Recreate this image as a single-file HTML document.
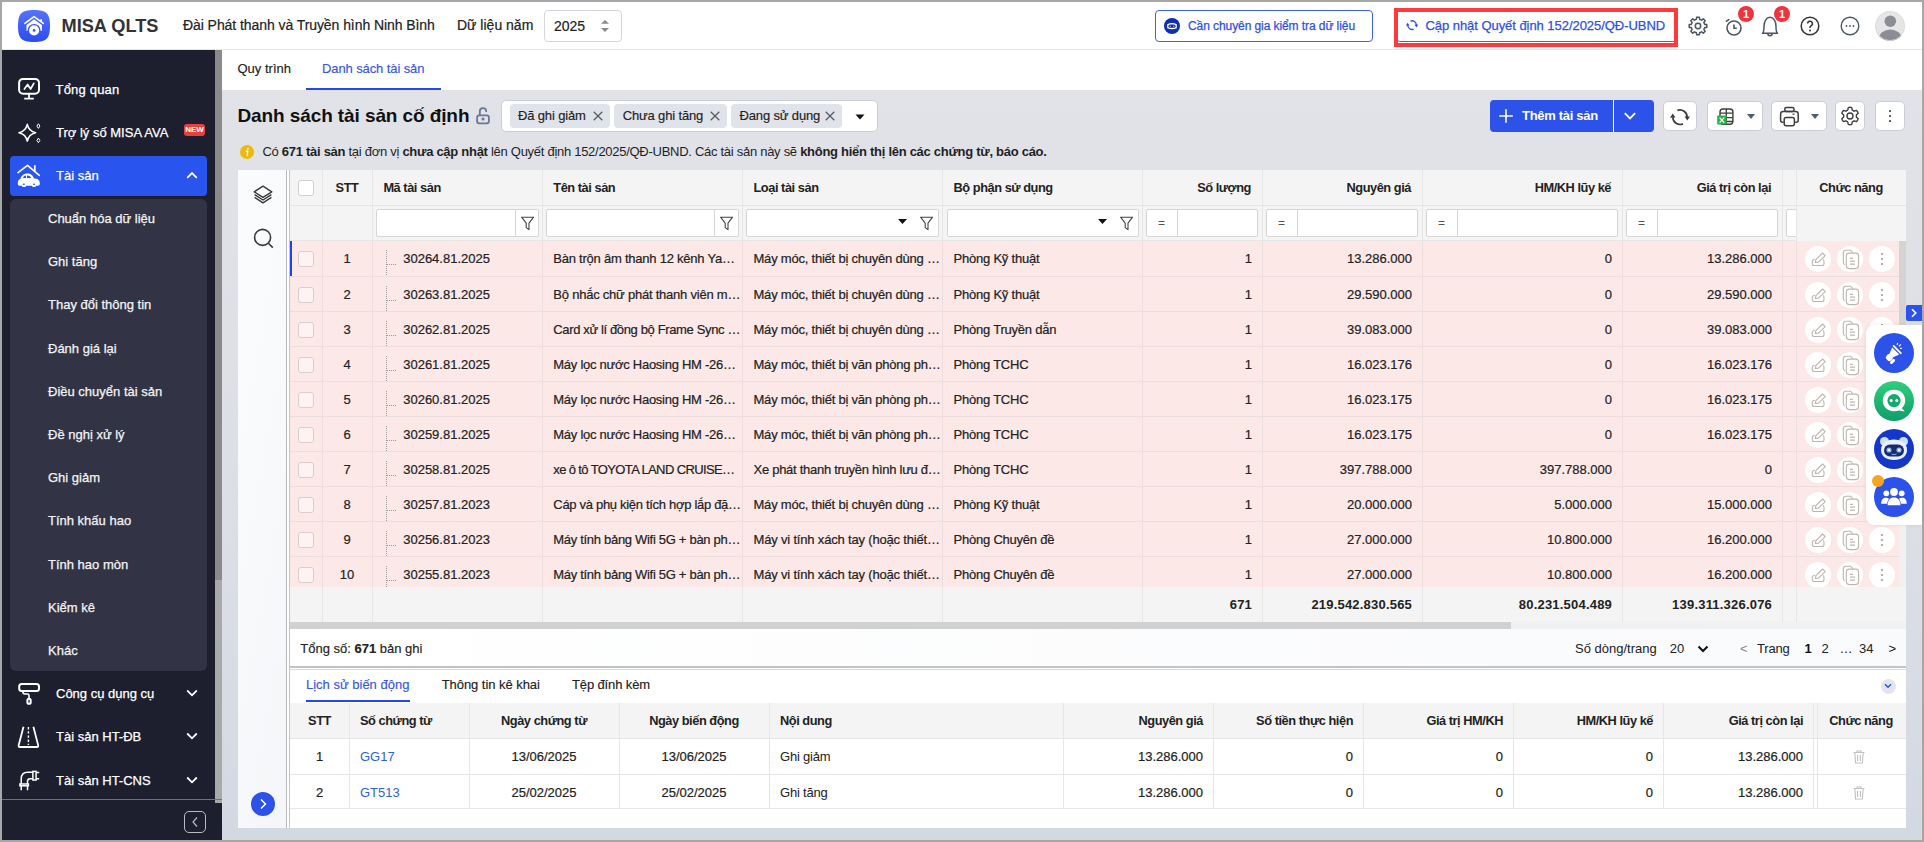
<!DOCTYPE html>
<html><head><meta charset="utf-8">
<style>
*{box-sizing:border-box;margin:0;padding:0}
html,body{width:1924px;height:842px;overflow:hidden;background:#a7a7a7;font-family:"Liberation Sans",sans-serif;color:#212121}
.abs{position:absolute}
.t{position:absolute;white-space:nowrap;line-height:16px;height:16px}
#hdr{position:absolute;left:2px;top:2px;width:1920px;height:48px;background:#fff;border-bottom:1px solid #e4e6eb}
#side{position:absolute;left:2px;top:50px;width:220px;height:790px;background:#1d1f2e;color:#fff}
#main{position:absolute;left:222px;top:50px;width:1700px;height:790px;background:linear-gradient(180deg,#e2e3e8 0%,#dddfe6 55%,#d3d9e3 100%)}
.hbtn{position:absolute;border:1px solid #3d5ef0;border-radius:4px;background:#fff;color:#2f50e8;font-size:13px}
.badge{position:absolute;width:16px;height:16px;border-radius:50%;background:#f0343c;color:#fff;font-size:11px;font-weight:700;text-align:center;line-height:16px}
.mi{position:absolute;left:0;width:220px;height:43px}
.mi .t{font-size:13px;color:#fff;top:14px}
.si{position:absolute;left:46px;font-size:13px;color:#f2f3f6;white-space:nowrap;line-height:16px;-webkit-text-stroke:0.25px currentColor}
.chev{position:absolute;left:184px}
</style></head>
<body>
<div id="hdr">
  <svg class="abs" style="left:16px;top:8px" width="32" height="32" viewBox="0 0 32 32">
    <defs><linearGradient id="lg" x1="0" y1="0" x2="0" y2="1"><stop offset="0" stop-color="#5574f9"/><stop offset="1" stop-color="#2c4cf1"/></linearGradient></defs>
    <path d="M16 0C28.5 0 32 3.5 32 16C32 28.5 28.5 32 16 32C3.5 32 0 28.5 0 16C0 3.5 3.5 0 16 0Z" fill="url(#lg)"/>
    <path d="M8.5 20.8V14.9L16 9.2L23.9 14.9V20.8Z" fill="#fff"/>
    <path d="M6.9 13.4L16 6.6L25.3 13.4" fill="none" stroke="#fff" stroke-width="1.6" stroke-linecap="round" stroke-linejoin="round"/>
    <path d="M22.3 9.2H24V12L22.3 11Z" fill="#fff"/>
    <circle cx="16.1" cy="20.4" r="6.4" fill="#3553f3"/>
    <circle cx="16.1" cy="20.4" r="5.1" fill="#fff"/>
    <circle cx="16.1" cy="20.4" r="1.4" fill="#3a59f3"/>
  </svg>
  <div class="t" style="left:59.5px;top:14.8px;font-size:18.2px;font-weight:700;color:#333;line-height:18px;height:18px">MISA QLTS</div>
  <div class="t" style="left:181px;top:15px;font-size:14px;letter-spacing:-0.07px;color:#222;-webkit-text-stroke:0.2px #222">Đài Phát thanh và Truyền hình Ninh Bình</div>
  <div class="t" style="left:455px;top:15px;font-size:14px;letter-spacing:0px;color:#222;-webkit-text-stroke:0.2px #222">Dữ liệu năm</div>
  <div class="abs" style="left:542px;top:8px;width:78px;height:31.5px;border:1px solid #d3d6dd;border-radius:4px">
    <div class="t" style="left:9px;top:6.8px;font-size:14px;color:#222;-webkit-text-stroke:0.2px #222">2025</div>
    <svg class="abs" style="left:56px;top:9.2px" width="8" height="12" viewBox="0 0 8 12"><path d="M0 3.7L4 0L8 3.7Z M0 7.9H8L4 12Z" fill="#8a8a8a"/></svg>
  </div>
  <div class="hbtn" style="left:1153px;top:8px;width:218px;height:32px">
    <svg class="abs" style="left:8px;top:7px" width="16" height="16" viewBox="0 0 16 16"><circle cx="8" cy="8" r="8" fill="#0d2fb0"/><path d="M3.2 6.2Q8 3.8 12.8 6.2V10.2Q8 12.4 3.2 10.2Z" fill="#fff"/><rect x="4.4" y="6.6" width="7.2" height="3.2" rx="1.6" fill="#1a2a6a"/><circle cx="6.2" cy="8.2" r="0.8" fill="#8fb0ff"/><circle cx="9.8" cy="8.2" r="0.8" fill="#8fb0ff"/></svg>
    <div class="t" style="left:32px;top:6.5px;font-size:12px;letter-spacing:-0.08px;-webkit-text-stroke:0.25px #2f50e8">Cần chuyên gia kiểm tra dữ liệu</div>
  </div>
  <div class="hbtn" style="left:1394px;top:8px;width:282px;height:32px">
    <svg class="abs" style="left:8.8px;top:8px" width="12" height="12" viewBox="0 0 20 20"><path d="M7.4 3.4A7.3 7.3 0 0 1 17.2 10.2" fill="none" stroke="#2f50e8" stroke-width="2.2"/><path d="M14.2 9.4L17.3 14L20.4 9.2Z" fill="#2f50e8"/><path d="M12.9 16.9A7.3 7.3 0 0 1 2.8 10.2" fill="none" stroke="#2f50e8" stroke-width="2.2"/><path d="M-0.4 11L2.7 6.4L5.8 10.8Z" fill="#2f50e8"/></svg>
    <div class="t" style="left:28.5px;top:7px;letter-spacing:-0.05px;-webkit-text-stroke:0.25px #2f50e8">Cập nhật Quyết định 152/2025/QĐ-UBND</div>
  </div>
  <div class="abs" style="left:1392px;top:6px;width:284px;height:39px;border:4px solid #fd3b3d"></div>
  <!-- gear -->
  <svg class="abs" style="left:1684px;top:11.8px" width="24" height="24" viewBox="0 0 24 24"><path fill="none" stroke="#4b5563" stroke-width="1.5" stroke-linejoin="round" d="M10.39 5.29 L10.61 3.21 L13.39 3.21 L13.61 5.29 L15.61 6.12 L17.23 4.80 L19.20 6.77 L17.88 8.39 L18.71 10.39 L20.79 10.61 L20.79 13.39 L18.71 13.61 L17.88 15.61 L19.20 17.23 L17.23 19.20 L15.61 17.88 L13.61 18.71 L13.39 20.79 L10.61 20.79 L10.39 18.71 L8.39 17.88 L6.77 19.20 L4.80 17.23 L6.12 15.61 L5.29 13.61 L3.21 13.39 L3.21 10.61 L5.29 10.39 L6.12 8.39 L4.80 6.77 L6.77 4.80 L8.39 6.12Z"/><circle cx="12" cy="12" r="2.7" fill="none" stroke="#4b5563" stroke-width="1.5"/></svg>
  <!-- timer -->
  <svg class="abs" style="left:1722px;top:15px" width="20" height="20" viewBox="0 0 20 20"><circle cx="10" cy="11" r="7" fill="none" stroke="#4b5563" stroke-width="1.6"/><path d="M10 7.5V11.2H12.8" fill="none" stroke="#4b5563" stroke-width="1.6"/><path d="M2.5 4.2L4.8 2.6" stroke="#4b5563" stroke-width="1.6" stroke-linecap="round"/></svg>
  <div class="badge" style="left:1736px;top:4px">1</div>
  <!-- bell -->
  <svg class="abs" style="left:1757px;top:13px" width="22" height="22" viewBox="0 0 22 22"><path d="M3.5 18.3C5 17 5 14.5 5 11.5C5 6 7.5 2.2 11 2.2C14.5 2.2 17 6 17 11.5C17 14.5 17 17 18.5 18.3Z" fill="none" stroke="#4b5563" stroke-width="1.5" stroke-linejoin="round"/><path d="M8.8 18.6A2.2 2.2 0 0 0 13.2 18.6" fill="none" stroke="#4b5563" stroke-width="1.5"/></svg>
  <div class="badge" style="left:1772px;top:4px">1</div>
  <!-- help -->
  <svg class="abs" style="left:1798px;top:14px" width="20" height="20" viewBox="0 0 20 20"><circle cx="10" cy="10" r="8.8" fill="none" stroke="#333" stroke-width="1.5"/><path d="M7.6 7.6A2.4 2.4 0 1 1 11 9.8C10.3 10.2 10 10.7 10 11.6V12" fill="none" stroke="#333" stroke-width="1.5"/><circle cx="10" cy="14.4" r="1" fill="#333"/></svg>
  <!-- more -->
  <svg class="abs" style="left:1838px;top:14px" width="20" height="20" viewBox="0 0 20 20"><circle cx="10" cy="10" r="8.8" fill="none" stroke="#4b5563" stroke-width="1.4"/><circle cx="6.5" cy="10" r="0.9" fill="#4b5563"/><circle cx="10" cy="10" r="0.9" fill="#4b5563"/><circle cx="13.5" cy="10" r="0.9" fill="#4b5563"/></svg>
  <!-- avatar -->
  <svg class="abs" style="left:1873px;top:9px" width="30" height="30" viewBox="0 0 30 30"><defs><clipPath id="av"><circle cx="15" cy="15" r="15"/></clipPath></defs><circle cx="15" cy="15" r="15" fill="#e6e6e6"/><g clip-path="url(#av)" fill="#8a8d96"><circle cx="15.3" cy="10.2" r="5.8"/><ellipse cx="15.3" cy="28" rx="11.5" ry="9.5"/></g><circle cx="15" cy="15" r="14.6" fill="none" stroke="#dcdcdc" stroke-width="0.8"/></svg>
</div>

<div id="side">
  <div class="abs" style="left:213px;top:0;width:7px;height:753px;background:#a9a9a9"></div><div class="abs" style="left:213px;top:0;width:7px;height:530px;background:#8a8a8a"></div>
  <div class="abs" style="left:8px;top:106px;width:197px;height:40px;border-radius:4px;background:#2a54ee"></div>
  <div class="abs" style="left:8px;top:149px;width:197px;height:472px;border-radius:6px;background:#323344"></div>
  <div class="abs" style="left:0;top:749px;width:220px;height:1px;background:#6b7088"></div>
  <div class="abs" style="left:182px;top:761px;width:22px;height:22px;border:1.5px solid #b9bbc4;border-radius:5px"></div>
  <svg class="abs" style="left:189px;top:766px" width="8" height="12" viewBox="0 0 8 12"><path d="M6 1.5L2 6L6 10.5" fill="none" stroke="#b9bbc4" stroke-width="1.2"/></svg>

  <!-- icons -->
  <svg class="abs" style="left:12px;top:24px" width="32" height="30" viewBox="0 0 32 30"><rect x="5.1" y="4.9" width="19.9" height="14.9" rx="4" fill="none" stroke="#fff" stroke-width="2"/><path d="M15 19.8V24.5M10.2 24.6H19.8" stroke="#fff" stroke-width="1.8"/><path d="M10.4 15L13.6 10.5L16.6 15L19.8 9.3" fill="none" stroke="#fff" stroke-width="1.7" stroke-linejoin="round" stroke-linecap="round"/></svg>
  <svg class="abs" style="left:12px;top:68px" width="32" height="30" viewBox="0 0 32 30"><path d="M13.3 6.4Q14.8 13.2 21.6 14.7Q14.8 16.2 13.3 23Q11.8 16.2 5 14.7Q11.8 13.2 13.3 6.4Z" fill="none" stroke="#fff" stroke-width="1.6" stroke-linejoin="round"/><path d="M24.4 5.8L25.9 8.1L24.4 10.4L22.9 8.1Z M24.4 20.1L25.9 22.4L24.4 24.7L22.9 22.4Z" fill="none" stroke="#fff" stroke-width="1"/></svg>
  <svg class="abs" style="left:12px;top:112px" width="32" height="30" viewBox="0 0 32 30"><path d="M4 10.6L13.5 3.4L25.3 13.3" fill="none" stroke="#fff" stroke-width="1.7" stroke-linecap="round" stroke-linejoin="round"/><path d="M20.8 3.2V9.6" stroke="#fff" stroke-width="1.7"/><path d="M6.3 16.8C7.8 13 10.3 11.5 13.3 11.5C16.4 11.5 18.6 12.8 20.1 16.8Z" fill="#fff"/><path d="M8.9 15.9C9.5 14.4 10.4 13.5 12 13.4V15.9Z M13 13.4C15 13.4 16.3 14.2 17.4 15.9H13Z" fill="#2a54ee"/><path d="M3.8 21C3.8 18.2 5.3 16.6 8.5 16.3H19.5C23.5 16.5 25.8 18 25.8 21V22Q25.8 23.8 24 23.8H22.3Q22 25 20 25Q18 25 17.7 23.8H12.3Q12 25 10 25Q8 25 7.7 23.8H5.6Q3.8 23.8 3.8 22Z" fill="#fff"/><ellipse cx="9.8" cy="22.3" rx="1.1" ry="0.8" fill="#2a54ee"/><ellipse cx="20" cy="22.3" rx="1.1" ry="0.8" fill="#2a54ee"/></svg>
  <svg class="abs" style="left:12px;top:628px" width="32" height="30" viewBox="0 0 32 30"><rect x="5.2" y="5.9" width="19.8" height="7" rx="2.5" fill="none" stroke="#fff" stroke-width="2"/><path d="M8.8 13.3Q8.8 16 11 16H13.5Q15 16 15 17.5V20" fill="none" stroke="#fff" stroke-width="1.6"/><rect x="13.4" y="20.8" width="3.3" height="5" rx="1.6" fill="none" stroke="#fff" stroke-width="2"/></svg>
  <svg class="abs" style="left:12px;top:670px" width="32" height="30" viewBox="0 0 32 30"><path d="M9.5 6.8L4.6 25.4Q4.4 27 5.8 27H23Q24.5 27 24.2 25.4L19.4 6.8" fill="none" stroke="#fff" stroke-width="1.8" stroke-linejoin="round"/><path d="M14.4 7V25" stroke="#fff" stroke-width="1.4" stroke-dasharray="2.4 1.8"/></svg>
  <svg class="abs" style="left:12px;top:714px" width="32" height="30" viewBox="0 0 32 30"><g transform="translate(0,-44)" fill="none" stroke="#fff" stroke-width="1.5"><path d="M7.2 64V59Q7.2 52.3 14 52.3H18.9"/><path d="M13.5 64V61.5Q13.5 58.8 16.2 58.8H18.9"/><rect x="18.9" y="51.4" width="3.2" height="8.6"/><path d="M22.1 52.6H25.2M22.1 58.7H25.2"/><rect x="5.9" y="64" width="8.5" height="1.8"/><path d="M7.2 65.8V70.3M13.5 65.8V70.3"/></g></svg>
  <!-- chevrons -->
  <svg class="chev" style="top:121px" width="12" height="8" viewBox="0 0 12 8"><path d="M1.2 6.8L6 2L10.8 6.8" fill="none" stroke="#fff" stroke-width="1.8"/></svg>
  <svg class="chev" style="top:639px" width="12" height="8" viewBox="0 0 12 8"><path d="M1.2 1.5L6 6.3L10.8 1.5" fill="none" stroke="#fff" stroke-width="1.8"/></svg>
  <svg class="chev" style="top:682px" width="12" height="8" viewBox="0 0 12 8"><path d="M1.2 1.5L6 6.3L10.8 1.5" fill="none" stroke="#fff" stroke-width="1.8"/></svg>
  <svg class="chev" style="top:726px" width="12" height="8" viewBox="0 0 12 8"><path d="M1.2 1.5L6 6.3L10.8 1.5" fill="none" stroke="#fff" stroke-width="1.8"/></svg>
  <div class="abs" style="left:182px;top:74px;width:21px;height:12px;border-radius:3px;background:#e8403f;color:#fff;font-size:8px;font-weight:700;text-align:center;line-height:12px">NEW</div>
  <!-- texts -->
  <div class="si" style="left:53.5px;top:31.8px;color:#fff;letter-spacing:0.2px">Tổng quan</div>
  <div class="si" style="left:54px;top:74.5px;color:#fff">Trợ lý số MISA AVA</div>
  <div class="si" style="left:54px;top:117.7px;color:#fff">Tài sản</div>
  <div class="si" style="top:160.9px">Chuẩn hóa dữ liệu</div>
  <div class="si" style="top:204.1px">Ghi tăng</div>
  <div class="si" style="top:247.3px">Thay đổi thông tin</div>
  <div class="si" style="top:290.5px">Đánh giá lại</div>
  <div class="si" style="top:333.7px">Điều chuyển tài sản</div>
  <div class="si" style="top:376.9px">Đề nghị xử lý</div>
  <div class="si" style="top:420.1px">Ghi giảm</div>
  <div class="si" style="top:463.3px">Tính khấu hao</div>
  <div class="si" style="top:506.5px">Tính hao mòn</div>
  <div class="si" style="top:549.7px">Kiểm kê</div>
  <div class="si" style="top:592.9px">Khác</div>
  <div class="si" style="left:54px;top:636.1px;color:#fff">Công cụ dụng cụ</div>
  <div class="si" style="left:54px;top:679.3px;color:#fff">Tài sản HT-ĐB</div>
  <div class="si" style="left:54px;top:722.5px;color:#fff">Tài sản HT-CNS</div>
</div>
<div id="main"></div>
<!--MAIN-->
<div class="abs" style="left:222px;top:50px;width:1700px;height:40px;background:#fff"></div>
<div class="t" style="left:237.5px;top:60.6px;height:16px;line-height:16px;font-size:13px;letter-spacing:0px;color:#222;-webkit-text-stroke:0.15px #222">Quy trình</div>
<div class="t" style="left:322px;top:60.6px;height:16px;line-height:16px;font-size:13px;letter-spacing:-0.1px;color:#3a55e8;-webkit-text-stroke:0.15px #3a55e8">Danh sách tài sản</div>
<div class="abs" style="left:306px;top:88px;width:135px;height:2px;background:#2447ef"></div>
<div class="t" style="left:237.5px;top:106.4px;height:20px;line-height:20px;font-size:19px;font-weight:700;letter-spacing:-0.1px;color:#111">Danh sách tài sản cố định</div>
<svg class="abs" style="left:470px;top:100px" width="30" height="30" viewBox="0 0 30 30"><rect x="7.1" y="15.3" width="11.8" height="8" rx="2" fill="none" stroke="#6b7794" stroke-width="1.8"/><path d="M9.8 15.3V11.5A3.2 3.2 0 0 1 16.2 11.2" fill="none" stroke="#6b7794" stroke-width="1.8" stroke-linecap="round"/><circle cx="13" cy="19.1" r="1.5" fill="#6b7794"/></svg>
<div class="abs" style="left:501px;top:100px;width:377px;height:32px;background:#fff;border:1px solid #c9cdd5;border-radius:5px"></div>
<div class="abs" style="left:510px;top:104px;width:100px;height:24px;background:#e1e3ea;border-radius:4px"></div>
<div class="t" style="left:518px;top:107.8px;height:16px;line-height:16px;font-size:13px;letter-spacing:-0.15px;color:#222;-webkit-text-stroke:0.15px #222">Đã ghi giảm</div>
<svg class="abs" style="left:593px;top:111px" width="10" height="10" viewBox="0 0 10 10"><path d="M0.7 0.7L9.3 9.3M9.3 0.7L0.7 9.3" stroke="#555b68" stroke-width="1.3"/></svg>
<div class="abs" style="left:614px;top:104px;width:113px;height:24px;background:#e1e3ea;border-radius:4px"></div>
<div class="t" style="left:622.7px;top:107.8px;height:16px;line-height:16px;font-size:13px;letter-spacing:-0.15px;color:#222;-webkit-text-stroke:0.15px #222">Chưa ghi tăng</div>
<svg class="abs" style="left:710px;top:111px" width="10" height="10" viewBox="0 0 10 10"><path d="M0.7 0.7L9.3 9.3M9.3 0.7L0.7 9.3" stroke="#555b68" stroke-width="1.3"/></svg>
<div class="abs" style="left:731px;top:104px;width:111px;height:24px;background:#e1e3ea;border-radius:4px"></div>
<div class="t" style="left:739.5px;top:107.8px;height:16px;line-height:16px;font-size:13px;letter-spacing:-0.15px;color:#222;-webkit-text-stroke:0.15px #222">Đang sử dụng</div>
<svg class="abs" style="left:825px;top:111px" width="10" height="10" viewBox="0 0 10 10"><path d="M0.7 0.7L9.3 9.3M9.3 0.7L0.7 9.3" stroke="#555b68" stroke-width="1.3"/></svg>
<svg class="abs" style="left:855px;top:114px" width="10" height="6" viewBox="0 0 10 6"><path d="M0.5 0.5H9.5L5 5.5Z" fill="#111"/></svg>
<svg class="abs" style="left:239.8px;top:145px" width="14" height="14" viewBox="0 0 14 14"><circle cx="7" cy="7" r="7" fill="#edb90a"/><circle cx="7.9" cy="3.6" r="0.85" fill="#fff"/><path d="M6.2 6.1H7.9L7 10.3Q6.9 10.9 7.6 10.8" fill="none" stroke="#fff" stroke-width="1.3" stroke-linecap="round" stroke-linejoin="round"/></svg>
<div class="t" style="left:262.4px;top:144.2px;height:16px;line-height:16px;font-size:13px;letter-spacing:-0.28px;color:#1f1f1f">Có <b>671 tài sản</b> tại đơn vị <b>chưa cập nhật</b> lên Quyết định 152/2025/QĐ-UBND. Các tài sản này sẽ <b>không hiển thị lên các chứng từ, báo cáo.</b></div>
<div class="abs" style="left:1490px;top:100px;width:164px;height:32px;background:#2c52ea;border-radius:4px"></div>
<div class="abs" style="left:1612.5px;top:100px;width:1.5px;height:32px;background:#fff"></div>
<svg class="abs" style="left:1498px;top:108px" width="16" height="16" viewBox="0 0 16 16"><path d="M8 1.2V14.8M1.2 8H14.8" stroke="#fff" stroke-width="1.6"/></svg>
<div class="t" style="left:1522px;top:108px;height:16px;line-height:16px;font-size:13px;font-weight:700;letter-spacing:-0.3px;color:#fff">Thêm tài sản</div>
<svg class="abs" style="left:1623.5px;top:112px" width="12" height="8" viewBox="0 0 12 8"><path d="M0.8 1.2L6 6.4L11.2 1.2" fill="none" stroke="#fff" stroke-width="1.8"/></svg>
<div class="abs" style="left:1663px;top:101px;width:34px;height:30px;background:#fff;border:1px solid #c9cdd6;border-radius:5px"></div>
<svg class="abs" style="left:1670px;top:107px" width="20" height="20" viewBox="0 0 20 20"><path d="M7.4 3.4A7.3 7.3 0 0 1 17.2 10.2" fill="none" stroke="#3d3d3d" stroke-width="1.7"/><path d="M14.5 9.6L17.3 13.6L20 9.4Z" fill="#3d3d3d"/><path d="M12.9 16.9A7.3 7.3 0 0 1 2.8 10.2" fill="none" stroke="#3d3d3d" stroke-width="1.7"/><path d="M0 10.8L2.7 6.6L5.5 10.6Z" fill="#3d3d3d"/></svg>
<div class="abs" style="left:1707px;top:101px;width:56px;height:30px;background:#fff;border:1px solid #c9cdd6;border-radius:5px"></div>
<svg class="abs" style="left:1716px;top:107px" width="20" height="20" viewBox="0 0 20 20"><rect x="4" y="2" width="12.9" height="15.3" rx="3" fill="none" stroke="#3d3d3d" stroke-width="1.4"/><path d="M10.3 2V17.3M4 6.1H16.9M4 10.6H16.9M4 14.5H16.9" stroke="#3d3d3d" stroke-width="1.3"/><rect x="1.2" y="8.4" width="9.4" height="9.2" rx="0.8" fill="#27b33f"/><path d="M3.6 10.6L8.2 15.6M8.2 10.6L3.6 15.6" stroke="#fff" stroke-width="1.4"/></svg>
<svg class="abs" style="left:1746.5px;top:114px" width="8" height="5" viewBox="0 0 8 5"><path d="M0 0H8L4 5Z" fill="#4f5a74"/></svg>
<div class="abs" style="left:1771px;top:101px;width:56px;height:30px;background:#fff;border:1px solid #c9cdd6;border-radius:5px"></div>
<svg class="abs" style="left:1778px;top:105px" width="22" height="22" viewBox="0 0 22 22"><rect x="6.8" y="2.4" width="9.2" height="4" rx="1.6" fill="none" stroke="#3d3d3d" stroke-width="1.5"/><path d="M5.6 17.2H4.6Q2.6 17.2 2.6 15.2V9Q2.6 6.4 5.2 6.4H17.6Q20.2 6.4 20.2 9V15.2Q20.2 17.2 18.2 17.2H17.2" fill="none" stroke="#3d3d3d" stroke-width="1.5"/><rect x="6.2" y="12.4" width="10.2" height="8.3" rx="2" fill="#fff" stroke="#3d3d3d" stroke-width="1.5"/><path d="M14.5 9.2H16.5" stroke="#3d3d3d" stroke-width="1.2"/></svg>
<svg class="abs" style="left:1810.5px;top:114px" width="8" height="5" viewBox="0 0 8 5"><path d="M0 0H8L4 5Z" fill="#4f5a74"/></svg>
<div class="abs" style="left:1835px;top:101px;width:30px;height:30px;background:#fff;border:1px solid #c9cdd6;border-radius:5px"></div>
<svg class="abs" style="left:1840px;top:106px" width="20" height="20" viewBox="0 0 20 20"><path fill="none" stroke="#3d3d3d" stroke-width="1.4" stroke-linejoin="round" d="M8.3 1.6Q10 0.9 11.7 1.6L12.3 4.1Q13.3 4.5 14.1 5.2L16.6 4.4Q17.8 5.6 18.2 7.3L16.3 9Q16.5 10 16.3 11L18.2 12.7Q17.8 14.4 16.6 15.6L14.1 14.8Q13.3 15.5 12.3 15.9L11.7 18.4Q10 19.1 8.3 18.4L7.7 15.9Q6.7 15.5 5.9 14.8L3.4 15.6Q2.2 14.4 1.8 12.7L3.7 11Q3.5 10 3.7 9L1.8 7.3Q2.2 5.6 3.4 4.4L5.9 5.2Q6.7 4.5 7.7 4.1Z"/><circle cx="10" cy="10" r="3" fill="none" stroke="#3d3d3d" stroke-width="1.4"/></svg>
<div class="abs" style="left:1875px;top:101px;width:30px;height:30px;background:#fff;border:1px solid #c9cdd6;border-radius:5px"></div>
<div class="abs" style="left:1889px;top:110.1px;width:2.2px;height:2.2px;background:#4b5563;border-radius:0.5px"></div>
<div class="abs" style="left:1889px;top:114.9px;width:2.2px;height:2.2px;background:#4b5563;border-radius:0.5px"></div>
<div class="abs" style="left:1889px;top:120px;width:2.2px;height:2.2px;background:#4b5563;border-radius:0.5px"></div>
<div class="abs" style="left:238px;top:170px;width:1668px;height:658px;background:#fff"></div>
<div class="abs" style="left:238px;top:170px;width:48px;height:658px;background:linear-gradient(100deg,#fbfcfd 0%,#f5f6f9 100%)"></div>
<div class="abs" style="left:286px;top:170px;width:1px;height:658px;background:#b9b9b9"></div>
<div class="abs" style="left:289px;top:170px;width:1px;height:658px;background:#c4c4c4"></div>
<svg class="abs" style="left:253px;top:185px" width="20" height="21" viewBox="0 0 20 21"><path d="M10 1.2L18.8 6.8L10 12.4L1.2 6.8Z" fill="none" stroke="#3a3a3a" stroke-width="1.4" stroke-linejoin="round"/><path d="M1.6 9.6L10 15L18.4 9.6" fill="none" stroke="#3a3a3a" stroke-width="1.4" stroke-linejoin="round"/><path d="M1.6 12.4L10 17.8L18.4 12.4" fill="none" stroke="#3a3a3a" stroke-width="1.4" stroke-linejoin="round"/></svg>
<svg class="abs" style="left:253px;top:228px" width="22" height="22" viewBox="0 0 22 22"><circle cx="9.6" cy="9.4" r="8" fill="none" stroke="#3a3a3a" stroke-width="1.6"/><path d="M15.4 15.2L19.8 19.6" stroke="#3a3a3a" stroke-width="1.6"/></svg>
<div class="abs" style="left:251px;top:792px;width:24px;height:24px;background:#2c52ea;border-radius:50%"></div>
<svg class="abs" style="left:258px;top:798px" width="10" height="12" viewBox="0 0 10 12"><path d="M3 1.5L7.5 6L3 10.5" fill="none" stroke="#fff" stroke-width="1.5"/></svg>
<div class="abs" style="left:290px;top:170px;width:1616px;height:71px;background:#f4f4f4"></div>
<div class="abs" style="left:290px;top:205px;width:1616px;height:1px;background:#e6e6e6"></div>
<div class="abs" style="left:290px;top:240px;width:1616px;height:1px;background:#e6e6e6"></div>
<div class="abs" style="left:322px;top:170px;width:1px;height:71px;background:#e6e6e6"></div>
<div class="abs" style="left:372px;top:170px;width:1px;height:71px;background:#e6e6e6"></div>
<div class="abs" style="left:542px;top:170px;width:1px;height:71px;background:#e6e6e6"></div>
<div class="abs" style="left:742px;top:170px;width:1px;height:71px;background:#e6e6e6"></div>
<div class="abs" style="left:942px;top:170px;width:1px;height:71px;background:#e6e6e6"></div>
<div class="abs" style="left:1142px;top:170px;width:1px;height:71px;background:#e6e6e6"></div>
<div class="abs" style="left:1262px;top:170px;width:1px;height:71px;background:#e6e6e6"></div>
<div class="abs" style="left:1422px;top:170px;width:1px;height:71px;background:#e6e6e6"></div>
<div class="abs" style="left:1622px;top:170px;width:1px;height:71px;background:#e6e6e6"></div>
<div class="abs" style="left:1782px;top:170px;width:1px;height:71px;background:#e6e6e6"></div>
<div class="abs" style="left:1796px;top:170px;width:1px;height:71px;background:#e6e6e6"></div>
<div class="abs" style="left:298px;top:180px;width:16px;height:16px;background:#fff;border:1px solid #cfcfcf;border-radius:3px"></div>
<div class="t" style="left:322.0px;top:179.5px;width:50px;height:16px;line-height:16px;text-align:center;font-size:12.8px;font-weight:700;letter-spacing:-0.45px;color:#222">STT</div>
<div class="t" style="left:383.4px;top:179.5px;height:16px;line-height:16px;font-size:12.8px;font-weight:700;letter-spacing:-0.45px;color:#222">Mã tài sản</div>
<div class="t" style="left:553.3px;top:179.5px;height:16px;line-height:16px;font-size:12.8px;font-weight:700;letter-spacing:-0.45px;color:#222">Tên tài sản</div>
<div class="t" style="left:753.5px;top:179.5px;height:16px;line-height:16px;font-size:12.8px;font-weight:700;letter-spacing:-0.45px;color:#222">Loại tài sản</div>
<div class="t" style="left:953.5px;top:179.5px;height:16px;line-height:16px;font-size:12.8px;font-weight:700;letter-spacing:-0.45px;color:#222">Bộ phận sử dụng</div>
<div class="t" style="left:951px;top:179.5px;width:300px;height:16px;line-height:16px;text-align:right;font-size:12.8px;font-weight:700;letter-spacing:-0.45px;color:#222">Số lượng</div>
<div class="t" style="left:1111px;top:179.5px;width:300px;height:16px;line-height:16px;text-align:right;font-size:12.8px;font-weight:700;letter-spacing:-0.45px;color:#222">Nguyên giá</div>
<div class="t" style="left:1311px;top:179.5px;width:300px;height:16px;line-height:16px;text-align:right;font-size:12.8px;font-weight:700;letter-spacing:-0.45px;color:#222">HM/KH lũy kế</div>
<div class="t" style="left:1471px;top:179.5px;width:300px;height:16px;line-height:16px;text-align:right;font-size:12.8px;font-weight:700;letter-spacing:-0.45px;color:#222">Giá trị còn lại</div>
<div class="t" style="left:1801.0px;top:179.5px;width:100px;height:16px;line-height:16px;text-align:center;font-size:12.8px;font-weight:700;letter-spacing:-0.45px;color:#222">Chức năng</div>
<div class="abs" style="left:376px;top:209px;width:162.60000000000002px;height:28px;background:#fff;border:1px solid #d6d6d6;border-radius:2px"></div>
<div class="abs" style="left:514.7px;top:209px;width:1px;height:28px;background:#d6d6d6"></div>
<svg class="abs" style="left:519.6500000000001px;top:216px" width="14" height="15" viewBox="0 0 14 15"><path d="M1.6 1.2H13.6L9 7.2V13.6L6.2 11.6V7.2Z" fill="none" stroke="#444" stroke-width="1.1" stroke-linejoin="round"/></svg>
<div class="abs" style="left:546px;top:209px;width:192.5px;height:28px;background:#fff;border:1px solid #d6d6d6;border-radius:2px"></div>
<div class="abs" style="left:714.4px;top:209px;width:1px;height:28px;background:#d6d6d6"></div>
<svg class="abs" style="left:719.45px;top:216px" width="14" height="15" viewBox="0 0 14 15"><path d="M1.6 1.2H13.6L9 7.2V13.6L6.2 11.6V7.2Z" fill="none" stroke="#444" stroke-width="1.1" stroke-linejoin="round"/></svg>
<div class="abs" style="left:746px;top:209px;width:192.5px;height:28px;background:#fff;border:1px solid #d6d6d6;border-radius:2px"></div>
<svg class="abs" style="left:897.5px;top:219px" width="9" height="5" viewBox="0 0 9 5"><path d="M0 0H9L4.5 5Z" fill="#111"/></svg>
<svg class="abs" style="left:918.5px;top:216px" width="14" height="15" viewBox="0 0 14 15"><path d="M1.6 1.2H13.6L9 7.2V13.6L6.2 11.6V7.2Z" fill="none" stroke="#444" stroke-width="1.1" stroke-linejoin="round"/></svg>
<div class="abs" style="left:946.5px;top:209px;width:192.0999999999999px;height:28px;background:#fff;border:1px solid #d6d6d6;border-radius:2px"></div>
<svg class="abs" style="left:1097.5px;top:219px" width="9" height="5" viewBox="0 0 9 5"><path d="M0 0H9L4.5 5Z" fill="#111"/></svg>
<svg class="abs" style="left:1118.5px;top:216px" width="14" height="15" viewBox="0 0 14 15"><path d="M1.6 1.2H13.6L9 7.2V13.6L6.2 11.6V7.2Z" fill="none" stroke="#444" stroke-width="1.1" stroke-linejoin="round"/></svg>
<div class="abs" style="left:1146px;top:209px;width:112px;height:28px;background:#fff;border:1px solid #d6d6d6;border-radius:2px"></div>
<div class="abs" style="left:1176.5px;top:209px;width:1px;height:28px;background:#d6d6d6"></div>
<div class="t" style="left:1151.5px;top:215px;width:20px;height:16px;line-height:16px;text-align:center;font-size:12px;color:#555">=</div>
<div class="abs" style="left:1266px;top:209px;width:152px;height:28px;background:#fff;border:1px solid #d6d6d6;border-radius:2px"></div>
<div class="abs" style="left:1296.5px;top:209px;width:1px;height:28px;background:#d6d6d6"></div>
<div class="t" style="left:1271.5px;top:215px;width:20px;height:16px;line-height:16px;text-align:center;font-size:12px;color:#555">=</div>
<div class="abs" style="left:1426px;top:209px;width:192px;height:28px;background:#fff;border:1px solid #d6d6d6;border-radius:2px"></div>
<div class="abs" style="left:1456.5px;top:209px;width:1px;height:28px;background:#d6d6d6"></div>
<div class="t" style="left:1431.5px;top:215px;width:20px;height:16px;line-height:16px;text-align:center;font-size:12px;color:#555">=</div>
<div class="abs" style="left:1626px;top:209px;width:152px;height:28px;background:#fff;border:1px solid #d6d6d6;border-radius:2px"></div>
<div class="abs" style="left:1656.5px;top:209px;width:1px;height:28px;background:#d6d6d6"></div>
<div class="t" style="left:1631.5px;top:215px;width:20px;height:16px;line-height:16px;text-align:center;font-size:12px;color:#555">=</div>
<div class="abs" style="left:1786px;top:209px;width:14px;height:28px;background:#fff;border:1px solid #d6d6d6;border-radius:2px"></div>
<div class="abs" style="left:1796px;top:205px;width:110px;height:36px;background:#f4f4f4"></div>
<div class="abs" style="left:1796px;top:170px;width:1px;height:71px;background:#e6e6e6"></div>
<div class="abs" style="left:1796px;top:205px;width:110px;height:1px;background:#e6e6e6"></div>
<div class="abs" style="left:290px;top:241px;width:1616px;height:346px;overflow:hidden">
<div class="abs" style="left:0px;top:0px;width:1609px;height:35px;background:#fce8e6"></div>
<div class="abs" style="left:0px;top:35px;width:1609px;height:35px;background:#fce8e6"></div>
<div class="abs" style="left:0px;top:70px;width:1609px;height:35px;background:#fce8e6"></div>
<div class="abs" style="left:0px;top:105px;width:1609px;height:35px;background:#fce8e6"></div>
<div class="abs" style="left:0px;top:140px;width:1609px;height:35px;background:#fce8e6"></div>
<div class="abs" style="left:0px;top:175px;width:1609px;height:35px;background:#fce8e6"></div>
<div class="abs" style="left:0px;top:210px;width:1609px;height:35px;background:#fce8e6"></div>
<div class="abs" style="left:0px;top:245px;width:1609px;height:35px;background:#fce8e6"></div>
<div class="abs" style="left:0px;top:280px;width:1609px;height:35px;background:#fce8e6"></div>
<div class="abs" style="left:0px;top:315px;width:1609px;height:35px;background:#fce8e6"></div>
<div class="abs" style="left:0px;top:35px;width:1609px;height:1px;background:#ecdede"></div>
<div class="abs" style="left:0px;top:70px;width:1609px;height:1px;background:#ecdede"></div>
<div class="abs" style="left:0px;top:105px;width:1609px;height:1px;background:#ecdede"></div>
<div class="abs" style="left:0px;top:140px;width:1609px;height:1px;background:#ecdede"></div>
<div class="abs" style="left:0px;top:175px;width:1609px;height:1px;background:#ecdede"></div>
<div class="abs" style="left:0px;top:210px;width:1609px;height:1px;background:#ecdede"></div>
<div class="abs" style="left:0px;top:245px;width:1609px;height:1px;background:#ecdede"></div>
<div class="abs" style="left:0px;top:280px;width:1609px;height:1px;background:#ecdede"></div>
<div class="abs" style="left:0px;top:315px;width:1609px;height:1px;background:#ecdede"></div>
<div class="abs" style="left:0px;top:350px;width:1609px;height:1px;background:#ecdede"></div>
<div class="abs" style="left:8px;top:9.5px;width:16px;height:16px;background:#fdf3f3;border:1px solid #dccdcd;border-radius:3px"></div>
<div class="t" style="left:32px;top:0px;width:50px;height:35px;line-height:35px;text-align:center;overflow:hidden;text-overflow:ellipsis;font-size:13px;color:#222;-webkit-text-stroke:0.2px #222">1</div>
<div class="abs" style="left:96px;top:9px;width:1px;height:26px;background:repeating-linear-gradient(#9a9a9a 0 1px,transparent 1px 2px)"></div>
<div class="abs" style="left:97px;top:23px;width:10px;height:1px;background:repeating-linear-gradient(90deg,#9a9a9a 0 1px,transparent 1px 2px)"></div>
<div class="t" style="left:113.19999999999999px;top:0px;height:35px;line-height:35px;text-align:left;overflow:hidden;text-overflow:ellipsis;font-size:13px;color:#222;-webkit-text-stroke:0.2px #222">30264.81.2025</div>
<div class="t" style="left:263.29999999999995px;top:0px;height:35px;line-height:35px;text-align:left;overflow:hidden;text-overflow:ellipsis;font-size:13px;color:#222;-webkit-text-stroke:0.2px #222;letter-spacing:-0.231px">Bàn trộn âm thanh 12 kênh Ya…</div>
<div class="t" style="left:463.5px;top:0px;height:35px;line-height:35px;text-align:left;overflow:hidden;text-overflow:ellipsis;font-size:13px;color:#222;-webkit-text-stroke:0.2px #222;letter-spacing:-0.215px">Máy móc, thiết bị chuyên dùng …</div>
<div class="t" style="left:663.5px;top:0px;width:186px;height:35px;line-height:35px;text-align:left;overflow:hidden;text-overflow:ellipsis;font-size:13px;color:#222;letter-spacing:-0.22px;-webkit-text-stroke:0.2px #222">Phòng Kỹ thuật</div>
<div class="t" style="left:772px;top:0px;width:190px;height:35px;line-height:35px;text-align:right;overflow:hidden;text-overflow:ellipsis;font-size:13px;color:#222;-webkit-text-stroke:0.2px #222">1</div>
<div class="t" style="left:932px;top:0px;width:190px;height:35px;line-height:35px;text-align:right;overflow:hidden;text-overflow:ellipsis;font-size:13px;color:#222;-webkit-text-stroke:0.2px #222">13.286.000</div>
<div class="t" style="left:1132px;top:0px;width:190px;height:35px;line-height:35px;text-align:right;overflow:hidden;text-overflow:ellipsis;font-size:13px;color:#222;-webkit-text-stroke:0.2px #222">0</div>
<div class="t" style="left:1292px;top:0px;width:190px;height:35px;line-height:35px;text-align:right;overflow:hidden;text-overflow:ellipsis;font-size:13px;color:#222;-webkit-text-stroke:0.2px #222">13.286.000</div>
<div class="abs" style="left:1515px;top:4.5px;width:26px;height:26px;background:#fff;border-radius:50%"></div>
<div class="abs" style="left:1547px;top:4.5px;width:26px;height:26px;background:#fff;border-radius:50%"></div>
<div class="abs" style="left:1579px;top:4.5px;width:26px;height:26px;background:#fff;border-radius:50%"></div>
<svg class="abs" style="left:1518px;top:8px" width="20" height="20" viewBox="0 0 20 20"><path d="M7.3 13.4L7.9 10.6L14.6 4L17.2 6.6L10.5 13.2Z" fill="none" stroke="#bdb6ae" stroke-width="1.1" stroke-linejoin="round"/><path d="M6.8 10.3Q4.3 10.6 4.3 12.6V14.4Q4.3 16.5 6.4 16.5H13.9Q16 16.5 16 14.4V12.6Q16 11.2 15.2 10.4" fill="none" stroke="#bdb6ae" stroke-width="1.1"/></svg>
<svg class="abs" style="left:1552px;top:8px" width="20" height="22" viewBox="0 0 20 22"><path d="M10.7 3.6L8.6 1.2H3.8Q1.3 1.2 1.3 3.7V13Q1.3 15.3 2.8 15.8" fill="none" stroke="#bdb6ae" stroke-width="1.1"/><rect x="4.3" y="4.1" width="12.3" height="15.5" rx="3" fill="none" stroke="#bdb6ae" stroke-width="1.1"/><path d="M8 9.3H10.9M8 12.1H12.9M8 15.1H12.9" stroke="#bdb6ae" stroke-width="1.2"/></svg>
<div class="abs" style="left:1591px;top:11.5px;width:2px;height:2px;background:#9d948c;border-radius:1px"></div>
<div class="abs" style="left:1591px;top:16.5px;width:2px;height:2px;background:#9d948c;border-radius:1px"></div>
<div class="abs" style="left:1591px;top:21.5px;width:2px;height:2px;background:#9d948c;border-radius:1px"></div>
<div class="abs" style="left:8px;top:45.5px;width:16px;height:16px;background:#fdf3f3;border:1px solid #dccdcd;border-radius:3px"></div>
<div class="t" style="left:32px;top:36px;width:50px;height:35px;line-height:35px;text-align:center;overflow:hidden;text-overflow:ellipsis;font-size:13px;color:#222;-webkit-text-stroke:0.2px #222">2</div>
<div class="abs" style="left:96px;top:45px;width:1px;height:26px;background:repeating-linear-gradient(#9a9a9a 0 1px,transparent 1px 2px)"></div>
<div class="abs" style="left:97px;top:59px;width:10px;height:1px;background:repeating-linear-gradient(90deg,#9a9a9a 0 1px,transparent 1px 2px)"></div>
<div class="t" style="left:113.19999999999999px;top:36px;height:35px;line-height:35px;text-align:left;overflow:hidden;text-overflow:ellipsis;font-size:13px;color:#222;-webkit-text-stroke:0.2px #222">30263.81.2025</div>
<div class="t" style="left:263.29999999999995px;top:36px;height:35px;line-height:35px;text-align:left;overflow:hidden;text-overflow:ellipsis;font-size:13px;color:#222;-webkit-text-stroke:0.2px #222;letter-spacing:-0.228px">Bộ nhắc chữ phát thanh viên m…</div>
<div class="t" style="left:463.5px;top:36px;height:35px;line-height:35px;text-align:left;overflow:hidden;text-overflow:ellipsis;font-size:13px;color:#222;-webkit-text-stroke:0.2px #222;letter-spacing:-0.215px">Máy móc, thiết bị chuyên dùng …</div>
<div class="t" style="left:663.5px;top:36px;width:186px;height:35px;line-height:35px;text-align:left;overflow:hidden;text-overflow:ellipsis;font-size:13px;color:#222;letter-spacing:-0.22px;-webkit-text-stroke:0.2px #222">Phòng Kỹ thuật</div>
<div class="t" style="left:772px;top:36px;width:190px;height:35px;line-height:35px;text-align:right;overflow:hidden;text-overflow:ellipsis;font-size:13px;color:#222;-webkit-text-stroke:0.2px #222">1</div>
<div class="t" style="left:932px;top:36px;width:190px;height:35px;line-height:35px;text-align:right;overflow:hidden;text-overflow:ellipsis;font-size:13px;color:#222;-webkit-text-stroke:0.2px #222">29.590.000</div>
<div class="t" style="left:1132px;top:36px;width:190px;height:35px;line-height:35px;text-align:right;overflow:hidden;text-overflow:ellipsis;font-size:13px;color:#222;-webkit-text-stroke:0.2px #222">0</div>
<div class="t" style="left:1292px;top:36px;width:190px;height:35px;line-height:35px;text-align:right;overflow:hidden;text-overflow:ellipsis;font-size:13px;color:#222;-webkit-text-stroke:0.2px #222">29.590.000</div>
<div class="abs" style="left:1515px;top:40.5px;width:26px;height:26px;background:#fff;border-radius:50%"></div>
<div class="abs" style="left:1547px;top:40.5px;width:26px;height:26px;background:#fff;border-radius:50%"></div>
<div class="abs" style="left:1579px;top:40.5px;width:26px;height:26px;background:#fff;border-radius:50%"></div>
<svg class="abs" style="left:1518px;top:44px" width="20" height="20" viewBox="0 0 20 20"><path d="M7.3 13.4L7.9 10.6L14.6 4L17.2 6.6L10.5 13.2Z" fill="none" stroke="#bdb6ae" stroke-width="1.1" stroke-linejoin="round"/><path d="M6.8 10.3Q4.3 10.6 4.3 12.6V14.4Q4.3 16.5 6.4 16.5H13.9Q16 16.5 16 14.4V12.6Q16 11.2 15.2 10.4" fill="none" stroke="#bdb6ae" stroke-width="1.1"/></svg>
<svg class="abs" style="left:1552px;top:44px" width="20" height="22" viewBox="0 0 20 22"><path d="M10.7 3.6L8.6 1.2H3.8Q1.3 1.2 1.3 3.7V13Q1.3 15.3 2.8 15.8" fill="none" stroke="#bdb6ae" stroke-width="1.1"/><rect x="4.3" y="4.1" width="12.3" height="15.5" rx="3" fill="none" stroke="#bdb6ae" stroke-width="1.1"/><path d="M8 9.3H10.9M8 12.1H12.9M8 15.1H12.9" stroke="#bdb6ae" stroke-width="1.2"/></svg>
<div class="abs" style="left:1591px;top:47.5px;width:2px;height:2px;background:#9d948c;border-radius:1px"></div>
<div class="abs" style="left:1591px;top:52.5px;width:2px;height:2px;background:#9d948c;border-radius:1px"></div>
<div class="abs" style="left:1591px;top:57.5px;width:2px;height:2px;background:#9d948c;border-radius:1px"></div>
<div class="abs" style="left:8px;top:80.5px;width:16px;height:16px;background:#fdf3f3;border:1px solid #dccdcd;border-radius:3px"></div>
<div class="t" style="left:32px;top:71px;width:50px;height:35px;line-height:35px;text-align:center;overflow:hidden;text-overflow:ellipsis;font-size:13px;color:#222;-webkit-text-stroke:0.2px #222">3</div>
<div class="abs" style="left:96px;top:80px;width:1px;height:26px;background:repeating-linear-gradient(#9a9a9a 0 1px,transparent 1px 2px)"></div>
<div class="abs" style="left:97px;top:94px;width:10px;height:1px;background:repeating-linear-gradient(90deg,#9a9a9a 0 1px,transparent 1px 2px)"></div>
<div class="t" style="left:113.19999999999999px;top:71px;height:35px;line-height:35px;text-align:left;overflow:hidden;text-overflow:ellipsis;font-size:13px;color:#222;-webkit-text-stroke:0.2px #222">30262.81.2025</div>
<div class="t" style="left:263.29999999999995px;top:71px;height:35px;line-height:35px;text-align:left;overflow:hidden;text-overflow:ellipsis;font-size:13px;color:#222;-webkit-text-stroke:0.2px #222;letter-spacing:-0.364px">Card xử lí đồng bộ Frame Sync …</div>
<div class="t" style="left:463.5px;top:71px;height:35px;line-height:35px;text-align:left;overflow:hidden;text-overflow:ellipsis;font-size:13px;color:#222;-webkit-text-stroke:0.2px #222;letter-spacing:-0.215px">Máy móc, thiết bị chuyên dùng …</div>
<div class="t" style="left:663.5px;top:71px;width:186px;height:35px;line-height:35px;text-align:left;overflow:hidden;text-overflow:ellipsis;font-size:13px;color:#222;letter-spacing:-0.22px;-webkit-text-stroke:0.2px #222">Phòng Truyền dẫn</div>
<div class="t" style="left:772px;top:71px;width:190px;height:35px;line-height:35px;text-align:right;overflow:hidden;text-overflow:ellipsis;font-size:13px;color:#222;-webkit-text-stroke:0.2px #222">1</div>
<div class="t" style="left:932px;top:71px;width:190px;height:35px;line-height:35px;text-align:right;overflow:hidden;text-overflow:ellipsis;font-size:13px;color:#222;-webkit-text-stroke:0.2px #222">39.083.000</div>
<div class="t" style="left:1132px;top:71px;width:190px;height:35px;line-height:35px;text-align:right;overflow:hidden;text-overflow:ellipsis;font-size:13px;color:#222;-webkit-text-stroke:0.2px #222">0</div>
<div class="t" style="left:1292px;top:71px;width:190px;height:35px;line-height:35px;text-align:right;overflow:hidden;text-overflow:ellipsis;font-size:13px;color:#222;-webkit-text-stroke:0.2px #222">39.083.000</div>
<div class="abs" style="left:1515px;top:75.5px;width:26px;height:26px;background:#fff;border-radius:50%"></div>
<div class="abs" style="left:1547px;top:75.5px;width:26px;height:26px;background:#fff;border-radius:50%"></div>
<div class="abs" style="left:1579px;top:75.5px;width:26px;height:26px;background:#fff;border-radius:50%"></div>
<svg class="abs" style="left:1518px;top:79px" width="20" height="20" viewBox="0 0 20 20"><path d="M7.3 13.4L7.9 10.6L14.6 4L17.2 6.6L10.5 13.2Z" fill="none" stroke="#bdb6ae" stroke-width="1.1" stroke-linejoin="round"/><path d="M6.8 10.3Q4.3 10.6 4.3 12.6V14.4Q4.3 16.5 6.4 16.5H13.9Q16 16.5 16 14.4V12.6Q16 11.2 15.2 10.4" fill="none" stroke="#bdb6ae" stroke-width="1.1"/></svg>
<svg class="abs" style="left:1552px;top:79px" width="20" height="22" viewBox="0 0 20 22"><path d="M10.7 3.6L8.6 1.2H3.8Q1.3 1.2 1.3 3.7V13Q1.3 15.3 2.8 15.8" fill="none" stroke="#bdb6ae" stroke-width="1.1"/><rect x="4.3" y="4.1" width="12.3" height="15.5" rx="3" fill="none" stroke="#bdb6ae" stroke-width="1.1"/><path d="M8 9.3H10.9M8 12.1H12.9M8 15.1H12.9" stroke="#bdb6ae" stroke-width="1.2"/></svg>
<div class="abs" style="left:1591px;top:82.5px;width:2px;height:2px;background:#9d948c;border-radius:1px"></div>
<div class="abs" style="left:1591px;top:87.5px;width:2px;height:2px;background:#9d948c;border-radius:1px"></div>
<div class="abs" style="left:1591px;top:92.5px;width:2px;height:2px;background:#9d948c;border-radius:1px"></div>
<div class="abs" style="left:8px;top:115.5px;width:16px;height:16px;background:#fdf3f3;border:1px solid #dccdcd;border-radius:3px"></div>
<div class="t" style="left:32px;top:106px;width:50px;height:35px;line-height:35px;text-align:center;overflow:hidden;text-overflow:ellipsis;font-size:13px;color:#222;-webkit-text-stroke:0.2px #222">4</div>
<div class="abs" style="left:96px;top:115px;width:1px;height:26px;background:repeating-linear-gradient(#9a9a9a 0 1px,transparent 1px 2px)"></div>
<div class="abs" style="left:97px;top:129px;width:10px;height:1px;background:repeating-linear-gradient(90deg,#9a9a9a 0 1px,transparent 1px 2px)"></div>
<div class="t" style="left:113.19999999999999px;top:106px;height:35px;line-height:35px;text-align:left;overflow:hidden;text-overflow:ellipsis;font-size:13px;color:#222;-webkit-text-stroke:0.2px #222">30261.81.2025</div>
<div class="t" style="left:263.29999999999995px;top:106px;height:35px;line-height:35px;text-align:left;overflow:hidden;text-overflow:ellipsis;font-size:13px;color:#222;-webkit-text-stroke:0.2px #222;letter-spacing:-0.267px">Máy lọc nước Haosing HM -26…</div>
<div class="t" style="left:463.5px;top:106px;height:35px;line-height:35px;text-align:left;overflow:hidden;text-overflow:ellipsis;font-size:13px;color:#222;-webkit-text-stroke:0.2px #222;letter-spacing:-0.212px">Máy móc, thiết bị văn phòng ph…</div>
<div class="t" style="left:663.5px;top:106px;width:186px;height:35px;line-height:35px;text-align:left;overflow:hidden;text-overflow:ellipsis;font-size:13px;color:#222;letter-spacing:-0.22px;-webkit-text-stroke:0.2px #222">Phòng TCHC</div>
<div class="t" style="left:772px;top:106px;width:190px;height:35px;line-height:35px;text-align:right;overflow:hidden;text-overflow:ellipsis;font-size:13px;color:#222;-webkit-text-stroke:0.2px #222">1</div>
<div class="t" style="left:932px;top:106px;width:190px;height:35px;line-height:35px;text-align:right;overflow:hidden;text-overflow:ellipsis;font-size:13px;color:#222;-webkit-text-stroke:0.2px #222">16.023.176</div>
<div class="t" style="left:1132px;top:106px;width:190px;height:35px;line-height:35px;text-align:right;overflow:hidden;text-overflow:ellipsis;font-size:13px;color:#222;-webkit-text-stroke:0.2px #222">0</div>
<div class="t" style="left:1292px;top:106px;width:190px;height:35px;line-height:35px;text-align:right;overflow:hidden;text-overflow:ellipsis;font-size:13px;color:#222;-webkit-text-stroke:0.2px #222">16.023.176</div>
<div class="abs" style="left:1515px;top:110.5px;width:26px;height:26px;background:#fff;border-radius:50%"></div>
<div class="abs" style="left:1547px;top:110.5px;width:26px;height:26px;background:#fff;border-radius:50%"></div>
<div class="abs" style="left:1579px;top:110.5px;width:26px;height:26px;background:#fff;border-radius:50%"></div>
<svg class="abs" style="left:1518px;top:114px" width="20" height="20" viewBox="0 0 20 20"><path d="M7.3 13.4L7.9 10.6L14.6 4L17.2 6.6L10.5 13.2Z" fill="none" stroke="#bdb6ae" stroke-width="1.1" stroke-linejoin="round"/><path d="M6.8 10.3Q4.3 10.6 4.3 12.6V14.4Q4.3 16.5 6.4 16.5H13.9Q16 16.5 16 14.4V12.6Q16 11.2 15.2 10.4" fill="none" stroke="#bdb6ae" stroke-width="1.1"/></svg>
<svg class="abs" style="left:1552px;top:114px" width="20" height="22" viewBox="0 0 20 22"><path d="M10.7 3.6L8.6 1.2H3.8Q1.3 1.2 1.3 3.7V13Q1.3 15.3 2.8 15.8" fill="none" stroke="#bdb6ae" stroke-width="1.1"/><rect x="4.3" y="4.1" width="12.3" height="15.5" rx="3" fill="none" stroke="#bdb6ae" stroke-width="1.1"/><path d="M8 9.3H10.9M8 12.1H12.9M8 15.1H12.9" stroke="#bdb6ae" stroke-width="1.2"/></svg>
<div class="abs" style="left:1591px;top:117.5px;width:2px;height:2px;background:#9d948c;border-radius:1px"></div>
<div class="abs" style="left:1591px;top:122.5px;width:2px;height:2px;background:#9d948c;border-radius:1px"></div>
<div class="abs" style="left:1591px;top:127.5px;width:2px;height:2px;background:#9d948c;border-radius:1px"></div>
<div class="abs" style="left:8px;top:150.5px;width:16px;height:16px;background:#fdf3f3;border:1px solid #dccdcd;border-radius:3px"></div>
<div class="t" style="left:32px;top:141px;width:50px;height:35px;line-height:35px;text-align:center;overflow:hidden;text-overflow:ellipsis;font-size:13px;color:#222;-webkit-text-stroke:0.2px #222">5</div>
<div class="abs" style="left:96px;top:150px;width:1px;height:26px;background:repeating-linear-gradient(#9a9a9a 0 1px,transparent 1px 2px)"></div>
<div class="abs" style="left:97px;top:164px;width:10px;height:1px;background:repeating-linear-gradient(90deg,#9a9a9a 0 1px,transparent 1px 2px)"></div>
<div class="t" style="left:113.19999999999999px;top:141px;height:35px;line-height:35px;text-align:left;overflow:hidden;text-overflow:ellipsis;font-size:13px;color:#222;-webkit-text-stroke:0.2px #222">30260.81.2025</div>
<div class="t" style="left:263.29999999999995px;top:141px;height:35px;line-height:35px;text-align:left;overflow:hidden;text-overflow:ellipsis;font-size:13px;color:#222;-webkit-text-stroke:0.2px #222;letter-spacing:-0.267px">Máy lọc nước Haosing HM -26…</div>
<div class="t" style="left:463.5px;top:141px;height:35px;line-height:35px;text-align:left;overflow:hidden;text-overflow:ellipsis;font-size:13px;color:#222;-webkit-text-stroke:0.2px #222;letter-spacing:-0.212px">Máy móc, thiết bị văn phòng ph…</div>
<div class="t" style="left:663.5px;top:141px;width:186px;height:35px;line-height:35px;text-align:left;overflow:hidden;text-overflow:ellipsis;font-size:13px;color:#222;letter-spacing:-0.22px;-webkit-text-stroke:0.2px #222">Phòng TCHC</div>
<div class="t" style="left:772px;top:141px;width:190px;height:35px;line-height:35px;text-align:right;overflow:hidden;text-overflow:ellipsis;font-size:13px;color:#222;-webkit-text-stroke:0.2px #222">1</div>
<div class="t" style="left:932px;top:141px;width:190px;height:35px;line-height:35px;text-align:right;overflow:hidden;text-overflow:ellipsis;font-size:13px;color:#222;-webkit-text-stroke:0.2px #222">16.023.175</div>
<div class="t" style="left:1132px;top:141px;width:190px;height:35px;line-height:35px;text-align:right;overflow:hidden;text-overflow:ellipsis;font-size:13px;color:#222;-webkit-text-stroke:0.2px #222">0</div>
<div class="t" style="left:1292px;top:141px;width:190px;height:35px;line-height:35px;text-align:right;overflow:hidden;text-overflow:ellipsis;font-size:13px;color:#222;-webkit-text-stroke:0.2px #222">16.023.175</div>
<div class="abs" style="left:1515px;top:145.5px;width:26px;height:26px;background:#fff;border-radius:50%"></div>
<div class="abs" style="left:1547px;top:145.5px;width:26px;height:26px;background:#fff;border-radius:50%"></div>
<div class="abs" style="left:1579px;top:145.5px;width:26px;height:26px;background:#fff;border-radius:50%"></div>
<svg class="abs" style="left:1518px;top:149px" width="20" height="20" viewBox="0 0 20 20"><path d="M7.3 13.4L7.9 10.6L14.6 4L17.2 6.6L10.5 13.2Z" fill="none" stroke="#bdb6ae" stroke-width="1.1" stroke-linejoin="round"/><path d="M6.8 10.3Q4.3 10.6 4.3 12.6V14.4Q4.3 16.5 6.4 16.5H13.9Q16 16.5 16 14.4V12.6Q16 11.2 15.2 10.4" fill="none" stroke="#bdb6ae" stroke-width="1.1"/></svg>
<svg class="abs" style="left:1552px;top:149px" width="20" height="22" viewBox="0 0 20 22"><path d="M10.7 3.6L8.6 1.2H3.8Q1.3 1.2 1.3 3.7V13Q1.3 15.3 2.8 15.8" fill="none" stroke="#bdb6ae" stroke-width="1.1"/><rect x="4.3" y="4.1" width="12.3" height="15.5" rx="3" fill="none" stroke="#bdb6ae" stroke-width="1.1"/><path d="M8 9.3H10.9M8 12.1H12.9M8 15.1H12.9" stroke="#bdb6ae" stroke-width="1.2"/></svg>
<div class="abs" style="left:1591px;top:152.5px;width:2px;height:2px;background:#9d948c;border-radius:1px"></div>
<div class="abs" style="left:1591px;top:157.5px;width:2px;height:2px;background:#9d948c;border-radius:1px"></div>
<div class="abs" style="left:1591px;top:162.5px;width:2px;height:2px;background:#9d948c;border-radius:1px"></div>
<div class="abs" style="left:8px;top:185.5px;width:16px;height:16px;background:#fdf3f3;border:1px solid #dccdcd;border-radius:3px"></div>
<div class="t" style="left:32px;top:176px;width:50px;height:35px;line-height:35px;text-align:center;overflow:hidden;text-overflow:ellipsis;font-size:13px;color:#222;-webkit-text-stroke:0.2px #222">6</div>
<div class="abs" style="left:96px;top:185px;width:1px;height:26px;background:repeating-linear-gradient(#9a9a9a 0 1px,transparent 1px 2px)"></div>
<div class="abs" style="left:97px;top:199px;width:10px;height:1px;background:repeating-linear-gradient(90deg,#9a9a9a 0 1px,transparent 1px 2px)"></div>
<div class="t" style="left:113.19999999999999px;top:176px;height:35px;line-height:35px;text-align:left;overflow:hidden;text-overflow:ellipsis;font-size:13px;color:#222;-webkit-text-stroke:0.2px #222">30259.81.2025</div>
<div class="t" style="left:263.29999999999995px;top:176px;height:35px;line-height:35px;text-align:left;overflow:hidden;text-overflow:ellipsis;font-size:13px;color:#222;-webkit-text-stroke:0.2px #222;letter-spacing:-0.267px">Máy lọc nước Haosing HM -26…</div>
<div class="t" style="left:463.5px;top:176px;height:35px;line-height:35px;text-align:left;overflow:hidden;text-overflow:ellipsis;font-size:13px;color:#222;-webkit-text-stroke:0.2px #222;letter-spacing:-0.212px">Máy móc, thiết bị văn phòng ph…</div>
<div class="t" style="left:663.5px;top:176px;width:186px;height:35px;line-height:35px;text-align:left;overflow:hidden;text-overflow:ellipsis;font-size:13px;color:#222;letter-spacing:-0.22px;-webkit-text-stroke:0.2px #222">Phòng TCHC</div>
<div class="t" style="left:772px;top:176px;width:190px;height:35px;line-height:35px;text-align:right;overflow:hidden;text-overflow:ellipsis;font-size:13px;color:#222;-webkit-text-stroke:0.2px #222">1</div>
<div class="t" style="left:932px;top:176px;width:190px;height:35px;line-height:35px;text-align:right;overflow:hidden;text-overflow:ellipsis;font-size:13px;color:#222;-webkit-text-stroke:0.2px #222">16.023.175</div>
<div class="t" style="left:1132px;top:176px;width:190px;height:35px;line-height:35px;text-align:right;overflow:hidden;text-overflow:ellipsis;font-size:13px;color:#222;-webkit-text-stroke:0.2px #222">0</div>
<div class="t" style="left:1292px;top:176px;width:190px;height:35px;line-height:35px;text-align:right;overflow:hidden;text-overflow:ellipsis;font-size:13px;color:#222;-webkit-text-stroke:0.2px #222">16.023.175</div>
<div class="abs" style="left:1515px;top:180.5px;width:26px;height:26px;background:#fff;border-radius:50%"></div>
<div class="abs" style="left:1547px;top:180.5px;width:26px;height:26px;background:#fff;border-radius:50%"></div>
<div class="abs" style="left:1579px;top:180.5px;width:26px;height:26px;background:#fff;border-radius:50%"></div>
<svg class="abs" style="left:1518px;top:184px" width="20" height="20" viewBox="0 0 20 20"><path d="M7.3 13.4L7.9 10.6L14.6 4L17.2 6.6L10.5 13.2Z" fill="none" stroke="#bdb6ae" stroke-width="1.1" stroke-linejoin="round"/><path d="M6.8 10.3Q4.3 10.6 4.3 12.6V14.4Q4.3 16.5 6.4 16.5H13.9Q16 16.5 16 14.4V12.6Q16 11.2 15.2 10.4" fill="none" stroke="#bdb6ae" stroke-width="1.1"/></svg>
<svg class="abs" style="left:1552px;top:184px" width="20" height="22" viewBox="0 0 20 22"><path d="M10.7 3.6L8.6 1.2H3.8Q1.3 1.2 1.3 3.7V13Q1.3 15.3 2.8 15.8" fill="none" stroke="#bdb6ae" stroke-width="1.1"/><rect x="4.3" y="4.1" width="12.3" height="15.5" rx="3" fill="none" stroke="#bdb6ae" stroke-width="1.1"/><path d="M8 9.3H10.9M8 12.1H12.9M8 15.1H12.9" stroke="#bdb6ae" stroke-width="1.2"/></svg>
<div class="abs" style="left:1591px;top:187.5px;width:2px;height:2px;background:#9d948c;border-radius:1px"></div>
<div class="abs" style="left:1591px;top:192.5px;width:2px;height:2px;background:#9d948c;border-radius:1px"></div>
<div class="abs" style="left:1591px;top:197.5px;width:2px;height:2px;background:#9d948c;border-radius:1px"></div>
<div class="abs" style="left:8px;top:220.5px;width:16px;height:16px;background:#fdf3f3;border:1px solid #dccdcd;border-radius:3px"></div>
<div class="t" style="left:32px;top:211px;width:50px;height:35px;line-height:35px;text-align:center;overflow:hidden;text-overflow:ellipsis;font-size:13px;color:#222;-webkit-text-stroke:0.2px #222">7</div>
<div class="abs" style="left:96px;top:220px;width:1px;height:26px;background:repeating-linear-gradient(#9a9a9a 0 1px,transparent 1px 2px)"></div>
<div class="abs" style="left:97px;top:234px;width:10px;height:1px;background:repeating-linear-gradient(90deg,#9a9a9a 0 1px,transparent 1px 2px)"></div>
<div class="t" style="left:113.19999999999999px;top:211px;height:35px;line-height:35px;text-align:left;overflow:hidden;text-overflow:ellipsis;font-size:13px;color:#222;-webkit-text-stroke:0.2px #222">30258.81.2025</div>
<div class="t" style="left:263.29999999999995px;top:211px;height:35px;line-height:35px;text-align:left;overflow:hidden;text-overflow:ellipsis;font-size:13px;color:#222;-webkit-text-stroke:0.2px #222;letter-spacing:-0.625px">xe ô tô TOYOTA LAND CRUISE…</div>
<div class="t" style="left:463.5px;top:211px;height:35px;line-height:35px;text-align:left;overflow:hidden;text-overflow:ellipsis;font-size:13px;color:#222;-webkit-text-stroke:0.2px #222;letter-spacing:-0.277px">Xe phát thanh truyền hình lưu đ…</div>
<div class="t" style="left:663.5px;top:211px;width:186px;height:35px;line-height:35px;text-align:left;overflow:hidden;text-overflow:ellipsis;font-size:13px;color:#222;letter-spacing:-0.22px;-webkit-text-stroke:0.2px #222">Phòng TCHC</div>
<div class="t" style="left:772px;top:211px;width:190px;height:35px;line-height:35px;text-align:right;overflow:hidden;text-overflow:ellipsis;font-size:13px;color:#222;-webkit-text-stroke:0.2px #222">1</div>
<div class="t" style="left:932px;top:211px;width:190px;height:35px;line-height:35px;text-align:right;overflow:hidden;text-overflow:ellipsis;font-size:13px;color:#222;-webkit-text-stroke:0.2px #222">397.788.000</div>
<div class="t" style="left:1132px;top:211px;width:190px;height:35px;line-height:35px;text-align:right;overflow:hidden;text-overflow:ellipsis;font-size:13px;color:#222;-webkit-text-stroke:0.2px #222">397.788.000</div>
<div class="t" style="left:1292px;top:211px;width:190px;height:35px;line-height:35px;text-align:right;overflow:hidden;text-overflow:ellipsis;font-size:13px;color:#222;-webkit-text-stroke:0.2px #222">0</div>
<div class="abs" style="left:1515px;top:215.5px;width:26px;height:26px;background:#fff;border-radius:50%"></div>
<div class="abs" style="left:1547px;top:215.5px;width:26px;height:26px;background:#fff;border-radius:50%"></div>
<div class="abs" style="left:1579px;top:215.5px;width:26px;height:26px;background:#fff;border-radius:50%"></div>
<svg class="abs" style="left:1518px;top:219px" width="20" height="20" viewBox="0 0 20 20"><path d="M7.3 13.4L7.9 10.6L14.6 4L17.2 6.6L10.5 13.2Z" fill="none" stroke="#bdb6ae" stroke-width="1.1" stroke-linejoin="round"/><path d="M6.8 10.3Q4.3 10.6 4.3 12.6V14.4Q4.3 16.5 6.4 16.5H13.9Q16 16.5 16 14.4V12.6Q16 11.2 15.2 10.4" fill="none" stroke="#bdb6ae" stroke-width="1.1"/></svg>
<svg class="abs" style="left:1552px;top:219px" width="20" height="22" viewBox="0 0 20 22"><path d="M10.7 3.6L8.6 1.2H3.8Q1.3 1.2 1.3 3.7V13Q1.3 15.3 2.8 15.8" fill="none" stroke="#bdb6ae" stroke-width="1.1"/><rect x="4.3" y="4.1" width="12.3" height="15.5" rx="3" fill="none" stroke="#bdb6ae" stroke-width="1.1"/><path d="M8 9.3H10.9M8 12.1H12.9M8 15.1H12.9" stroke="#bdb6ae" stroke-width="1.2"/></svg>
<div class="abs" style="left:1591px;top:222.5px;width:2px;height:2px;background:#9d948c;border-radius:1px"></div>
<div class="abs" style="left:1591px;top:227.5px;width:2px;height:2px;background:#9d948c;border-radius:1px"></div>
<div class="abs" style="left:1591px;top:232.5px;width:2px;height:2px;background:#9d948c;border-radius:1px"></div>
<div class="abs" style="left:8px;top:255.5px;width:16px;height:16px;background:#fdf3f3;border:1px solid #dccdcd;border-radius:3px"></div>
<div class="t" style="left:32px;top:246px;width:50px;height:35px;line-height:35px;text-align:center;overflow:hidden;text-overflow:ellipsis;font-size:13px;color:#222;-webkit-text-stroke:0.2px #222">8</div>
<div class="abs" style="left:96px;top:255px;width:1px;height:26px;background:repeating-linear-gradient(#9a9a9a 0 1px,transparent 1px 2px)"></div>
<div class="abs" style="left:97px;top:269px;width:10px;height:1px;background:repeating-linear-gradient(90deg,#9a9a9a 0 1px,transparent 1px 2px)"></div>
<div class="t" style="left:113.19999999999999px;top:246px;height:35px;line-height:35px;text-align:left;overflow:hidden;text-overflow:ellipsis;font-size:13px;color:#222;-webkit-text-stroke:0.2px #222">30257.81.2023</div>
<div class="t" style="left:263.29999999999995px;top:246px;height:35px;line-height:35px;text-align:left;overflow:hidden;text-overflow:ellipsis;font-size:13px;color:#222;-webkit-text-stroke:0.2px #222;letter-spacing:-0.305px">Cáp và phụ kiện tích hợp lắp đặ…</div>
<div class="t" style="left:463.5px;top:246px;height:35px;line-height:35px;text-align:left;overflow:hidden;text-overflow:ellipsis;font-size:13px;color:#222;-webkit-text-stroke:0.2px #222;letter-spacing:-0.215px">Máy móc, thiết bị chuyên dùng …</div>
<div class="t" style="left:663.5px;top:246px;width:186px;height:35px;line-height:35px;text-align:left;overflow:hidden;text-overflow:ellipsis;font-size:13px;color:#222;letter-spacing:-0.22px;-webkit-text-stroke:0.2px #222">Phòng Kỹ thuật</div>
<div class="t" style="left:772px;top:246px;width:190px;height:35px;line-height:35px;text-align:right;overflow:hidden;text-overflow:ellipsis;font-size:13px;color:#222;-webkit-text-stroke:0.2px #222">1</div>
<div class="t" style="left:932px;top:246px;width:190px;height:35px;line-height:35px;text-align:right;overflow:hidden;text-overflow:ellipsis;font-size:13px;color:#222;-webkit-text-stroke:0.2px #222">20.000.000</div>
<div class="t" style="left:1132px;top:246px;width:190px;height:35px;line-height:35px;text-align:right;overflow:hidden;text-overflow:ellipsis;font-size:13px;color:#222;-webkit-text-stroke:0.2px #222">5.000.000</div>
<div class="t" style="left:1292px;top:246px;width:190px;height:35px;line-height:35px;text-align:right;overflow:hidden;text-overflow:ellipsis;font-size:13px;color:#222;-webkit-text-stroke:0.2px #222">15.000.000</div>
<div class="abs" style="left:1515px;top:250.5px;width:26px;height:26px;background:#fff;border-radius:50%"></div>
<div class="abs" style="left:1547px;top:250.5px;width:26px;height:26px;background:#fff;border-radius:50%"></div>
<div class="abs" style="left:1579px;top:250.5px;width:26px;height:26px;background:#fff;border-radius:50%"></div>
<svg class="abs" style="left:1518px;top:254px" width="20" height="20" viewBox="0 0 20 20"><path d="M7.3 13.4L7.9 10.6L14.6 4L17.2 6.6L10.5 13.2Z" fill="none" stroke="#bdb6ae" stroke-width="1.1" stroke-linejoin="round"/><path d="M6.8 10.3Q4.3 10.6 4.3 12.6V14.4Q4.3 16.5 6.4 16.5H13.9Q16 16.5 16 14.4V12.6Q16 11.2 15.2 10.4" fill="none" stroke="#bdb6ae" stroke-width="1.1"/></svg>
<svg class="abs" style="left:1552px;top:254px" width="20" height="22" viewBox="0 0 20 22"><path d="M10.7 3.6L8.6 1.2H3.8Q1.3 1.2 1.3 3.7V13Q1.3 15.3 2.8 15.8" fill="none" stroke="#bdb6ae" stroke-width="1.1"/><rect x="4.3" y="4.1" width="12.3" height="15.5" rx="3" fill="none" stroke="#bdb6ae" stroke-width="1.1"/><path d="M8 9.3H10.9M8 12.1H12.9M8 15.1H12.9" stroke="#bdb6ae" stroke-width="1.2"/></svg>
<div class="abs" style="left:1591px;top:257.5px;width:2px;height:2px;background:#9d948c;border-radius:1px"></div>
<div class="abs" style="left:1591px;top:262.5px;width:2px;height:2px;background:#9d948c;border-radius:1px"></div>
<div class="abs" style="left:1591px;top:267.5px;width:2px;height:2px;background:#9d948c;border-radius:1px"></div>
<div class="abs" style="left:8px;top:290.5px;width:16px;height:16px;background:#fdf3f3;border:1px solid #dccdcd;border-radius:3px"></div>
<div class="t" style="left:32px;top:281px;width:50px;height:35px;line-height:35px;text-align:center;overflow:hidden;text-overflow:ellipsis;font-size:13px;color:#222;-webkit-text-stroke:0.2px #222">9</div>
<div class="abs" style="left:96px;top:290px;width:1px;height:26px;background:repeating-linear-gradient(#9a9a9a 0 1px,transparent 1px 2px)"></div>
<div class="abs" style="left:97px;top:304px;width:10px;height:1px;background:repeating-linear-gradient(90deg,#9a9a9a 0 1px,transparent 1px 2px)"></div>
<div class="t" style="left:113.19999999999999px;top:281px;height:35px;line-height:35px;text-align:left;overflow:hidden;text-overflow:ellipsis;font-size:13px;color:#222;-webkit-text-stroke:0.2px #222">30256.81.2023</div>
<div class="t" style="left:263.29999999999995px;top:281px;height:35px;line-height:35px;text-align:left;overflow:hidden;text-overflow:ellipsis;font-size:13px;color:#222;-webkit-text-stroke:0.2px #222;letter-spacing:-0.303px">Máy tính bảng Wifi 5G + bàn ph…</div>
<div class="t" style="left:463.5px;top:281px;height:35px;line-height:35px;text-align:left;overflow:hidden;text-overflow:ellipsis;font-size:13px;color:#222;-webkit-text-stroke:0.2px #222;letter-spacing:-0.178px">Máy vi tính xách tay (hoặc thiết…</div>
<div class="t" style="left:663.5px;top:281px;width:186px;height:35px;line-height:35px;text-align:left;overflow:hidden;text-overflow:ellipsis;font-size:13px;color:#222;letter-spacing:-0.22px;-webkit-text-stroke:0.2px #222">Phòng Chuyên đề</div>
<div class="t" style="left:772px;top:281px;width:190px;height:35px;line-height:35px;text-align:right;overflow:hidden;text-overflow:ellipsis;font-size:13px;color:#222;-webkit-text-stroke:0.2px #222">1</div>
<div class="t" style="left:932px;top:281px;width:190px;height:35px;line-height:35px;text-align:right;overflow:hidden;text-overflow:ellipsis;font-size:13px;color:#222;-webkit-text-stroke:0.2px #222">27.000.000</div>
<div class="t" style="left:1132px;top:281px;width:190px;height:35px;line-height:35px;text-align:right;overflow:hidden;text-overflow:ellipsis;font-size:13px;color:#222;-webkit-text-stroke:0.2px #222">10.800.000</div>
<div class="t" style="left:1292px;top:281px;width:190px;height:35px;line-height:35px;text-align:right;overflow:hidden;text-overflow:ellipsis;font-size:13px;color:#222;-webkit-text-stroke:0.2px #222">16.200.000</div>
<div class="abs" style="left:1515px;top:285.5px;width:26px;height:26px;background:#fff;border-radius:50%"></div>
<div class="abs" style="left:1547px;top:285.5px;width:26px;height:26px;background:#fff;border-radius:50%"></div>
<div class="abs" style="left:1579px;top:285.5px;width:26px;height:26px;background:#fff;border-radius:50%"></div>
<svg class="abs" style="left:1518px;top:289px" width="20" height="20" viewBox="0 0 20 20"><path d="M7.3 13.4L7.9 10.6L14.6 4L17.2 6.6L10.5 13.2Z" fill="none" stroke="#bdb6ae" stroke-width="1.1" stroke-linejoin="round"/><path d="M6.8 10.3Q4.3 10.6 4.3 12.6V14.4Q4.3 16.5 6.4 16.5H13.9Q16 16.5 16 14.4V12.6Q16 11.2 15.2 10.4" fill="none" stroke="#bdb6ae" stroke-width="1.1"/></svg>
<svg class="abs" style="left:1552px;top:289px" width="20" height="22" viewBox="0 0 20 22"><path d="M10.7 3.6L8.6 1.2H3.8Q1.3 1.2 1.3 3.7V13Q1.3 15.3 2.8 15.8" fill="none" stroke="#bdb6ae" stroke-width="1.1"/><rect x="4.3" y="4.1" width="12.3" height="15.5" rx="3" fill="none" stroke="#bdb6ae" stroke-width="1.1"/><path d="M8 9.3H10.9M8 12.1H12.9M8 15.1H12.9" stroke="#bdb6ae" stroke-width="1.2"/></svg>
<div class="abs" style="left:1591px;top:292.5px;width:2px;height:2px;background:#9d948c;border-radius:1px"></div>
<div class="abs" style="left:1591px;top:297.5px;width:2px;height:2px;background:#9d948c;border-radius:1px"></div>
<div class="abs" style="left:1591px;top:302.5px;width:2px;height:2px;background:#9d948c;border-radius:1px"></div>
<div class="abs" style="left:8px;top:325.5px;width:16px;height:16px;background:#fdf3f3;border:1px solid #dccdcd;border-radius:3px"></div>
<div class="t" style="left:32px;top:316px;width:50px;height:35px;line-height:35px;text-align:center;overflow:hidden;text-overflow:ellipsis;font-size:13px;color:#222;-webkit-text-stroke:0.2px #222">10</div>
<div class="abs" style="left:96px;top:325px;width:1px;height:26px;background:repeating-linear-gradient(#9a9a9a 0 1px,transparent 1px 2px)"></div>
<div class="abs" style="left:97px;top:339px;width:10px;height:1px;background:repeating-linear-gradient(90deg,#9a9a9a 0 1px,transparent 1px 2px)"></div>
<div class="t" style="left:113.19999999999999px;top:316px;height:35px;line-height:35px;text-align:left;overflow:hidden;text-overflow:ellipsis;font-size:13px;color:#222;-webkit-text-stroke:0.2px #222">30255.81.2023</div>
<div class="t" style="left:263.29999999999995px;top:316px;height:35px;line-height:35px;text-align:left;overflow:hidden;text-overflow:ellipsis;font-size:13px;color:#222;-webkit-text-stroke:0.2px #222;letter-spacing:-0.303px">Máy tính bảng Wifi 5G + bàn ph…</div>
<div class="t" style="left:463.5px;top:316px;height:35px;line-height:35px;text-align:left;overflow:hidden;text-overflow:ellipsis;font-size:13px;color:#222;-webkit-text-stroke:0.2px #222;letter-spacing:-0.178px">Máy vi tính xách tay (hoặc thiết…</div>
<div class="t" style="left:663.5px;top:316px;width:186px;height:35px;line-height:35px;text-align:left;overflow:hidden;text-overflow:ellipsis;font-size:13px;color:#222;letter-spacing:-0.22px;-webkit-text-stroke:0.2px #222">Phòng Chuyên đề</div>
<div class="t" style="left:772px;top:316px;width:190px;height:35px;line-height:35px;text-align:right;overflow:hidden;text-overflow:ellipsis;font-size:13px;color:#222;-webkit-text-stroke:0.2px #222">1</div>
<div class="t" style="left:932px;top:316px;width:190px;height:35px;line-height:35px;text-align:right;overflow:hidden;text-overflow:ellipsis;font-size:13px;color:#222;-webkit-text-stroke:0.2px #222">27.000.000</div>
<div class="t" style="left:1132px;top:316px;width:190px;height:35px;line-height:35px;text-align:right;overflow:hidden;text-overflow:ellipsis;font-size:13px;color:#222;-webkit-text-stroke:0.2px #222">10.800.000</div>
<div class="t" style="left:1292px;top:316px;width:190px;height:35px;line-height:35px;text-align:right;overflow:hidden;text-overflow:ellipsis;font-size:13px;color:#222;-webkit-text-stroke:0.2px #222">16.200.000</div>
<div class="abs" style="left:1515px;top:320.5px;width:26px;height:26px;background:#fff;border-radius:50%"></div>
<div class="abs" style="left:1547px;top:320.5px;width:26px;height:26px;background:#fff;border-radius:50%"></div>
<div class="abs" style="left:1579px;top:320.5px;width:26px;height:26px;background:#fff;border-radius:50%"></div>
<svg class="abs" style="left:1518px;top:324px" width="20" height="20" viewBox="0 0 20 20"><path d="M7.3 13.4L7.9 10.6L14.6 4L17.2 6.6L10.5 13.2Z" fill="none" stroke="#bdb6ae" stroke-width="1.1" stroke-linejoin="round"/><path d="M6.8 10.3Q4.3 10.6 4.3 12.6V14.4Q4.3 16.5 6.4 16.5H13.9Q16 16.5 16 14.4V12.6Q16 11.2 15.2 10.4" fill="none" stroke="#bdb6ae" stroke-width="1.1"/></svg>
<svg class="abs" style="left:1552px;top:324px" width="20" height="22" viewBox="0 0 20 22"><path d="M10.7 3.6L8.6 1.2H3.8Q1.3 1.2 1.3 3.7V13Q1.3 15.3 2.8 15.8" fill="none" stroke="#bdb6ae" stroke-width="1.1"/><rect x="4.3" y="4.1" width="12.3" height="15.5" rx="3" fill="none" stroke="#bdb6ae" stroke-width="1.1"/><path d="M8 9.3H10.9M8 12.1H12.9M8 15.1H12.9" stroke="#bdb6ae" stroke-width="1.2"/></svg>
<div class="abs" style="left:1591px;top:327.5px;width:2px;height:2px;background:#9d948c;border-radius:1px"></div>
<div class="abs" style="left:1591px;top:332.5px;width:2px;height:2px;background:#9d948c;border-radius:1px"></div>
<div class="abs" style="left:1591px;top:337.5px;width:2px;height:2px;background:#9d948c;border-radius:1px"></div>
<div class="abs" style="left:32px;top:0px;width:1px;height:346px;background:#ecdede"></div>
<div class="abs" style="left:82px;top:0px;width:1px;height:346px;background:#ecdede"></div>
<div class="abs" style="left:252px;top:0px;width:1px;height:346px;background:#ecdede"></div>
<div class="abs" style="left:452px;top:0px;width:1px;height:346px;background:#ecdede"></div>
<div class="abs" style="left:652px;top:0px;width:1px;height:346px;background:#ecdede"></div>
<div class="abs" style="left:852px;top:0px;width:1px;height:346px;background:#ecdede"></div>
<div class="abs" style="left:972px;top:0px;width:1px;height:346px;background:#ecdede"></div>
<div class="abs" style="left:1132px;top:0px;width:1px;height:346px;background:#ecdede"></div>
<div class="abs" style="left:1332px;top:0px;width:1px;height:346px;background:#ecdede"></div>
<div class="abs" style="left:1492px;top:0px;width:1px;height:346px;background:#ecdede"></div>
<div class="abs" style="left:1506px;top:0px;width:1px;height:346px;background:#ecdede"></div>
<div class="abs" style="left:0px;top:0px;width:2px;height:35px;background:#2541ee"></div>
</div>
<div class="abs" style="left:1899px;top:241px;width:7px;height:346px;background:#f1f1f1"></div>
<div class="abs" style="left:1899px;top:241px;width:7px;height:180px;background:#d4d4d4"></div>
<div class="abs" style="left:290px;top:587px;width:1616px;height:35px;background:#f4f4f4"></div>
<div class="abs" style="left:322px;top:587px;width:1px;height:35px;background:#e6e6e6"></div>
<div class="abs" style="left:372px;top:587px;width:1px;height:35px;background:#e6e6e6"></div>
<div class="abs" style="left:542px;top:587px;width:1px;height:35px;background:#e6e6e6"></div>
<div class="abs" style="left:742px;top:587px;width:1px;height:35px;background:#e6e6e6"></div>
<div class="abs" style="left:942px;top:587px;width:1px;height:35px;background:#e6e6e6"></div>
<div class="abs" style="left:1142px;top:587px;width:1px;height:35px;background:#e6e6e6"></div>
<div class="abs" style="left:1262px;top:587px;width:1px;height:35px;background:#e6e6e6"></div>
<div class="abs" style="left:1422px;top:587px;width:1px;height:35px;background:#e6e6e6"></div>
<div class="abs" style="left:1622px;top:587px;width:1px;height:35px;background:#e6e6e6"></div>
<div class="abs" style="left:1782px;top:587px;width:1px;height:35px;background:#e6e6e6"></div>
<div class="abs" style="left:1796px;top:587px;width:1px;height:35px;background:#e6e6e6"></div>
<div class="t" style="left:952px;top:596.5px;width:300px;height:16px;line-height:16px;text-align:right;font-size:13px;font-weight:700;color:#222;letter-spacing:0.2px">671</div>
<div class="t" style="left:1112px;top:596.5px;width:300px;height:16px;line-height:16px;text-align:right;font-size:13px;font-weight:700;color:#222;letter-spacing:0.2px">219.542.830.565</div>
<div class="t" style="left:1312px;top:596.5px;width:300px;height:16px;line-height:16px;text-align:right;font-size:13px;font-weight:700;color:#222;letter-spacing:0.2px">80.231.504.489</div>
<div class="t" style="left:1472px;top:596.5px;width:300px;height:16px;line-height:16px;text-align:right;font-size:13px;font-weight:700;color:#222;letter-spacing:0.2px">139.311.326.076</div>
<div class="abs" style="left:290px;top:622px;width:1616px;height:7px;background:#f1f1f1"></div>
<div class="abs" style="left:290px;top:622px;width:1221px;height:7px;background:#d1d1d1"></div>
<div class="abs" style="left:290px;top:629px;width:1616px;height:37px;background:linear-gradient(90deg,#fff,#f9fafc)"></div>
<div class="t" style="left:300.3px;top:641.2px;height:16px;line-height:16px;font-size:13px;letter-spacing:0px;color:#222;-webkit-text-stroke:0.15px #222">Tổng số: <b>671</b> bản ghi</div>
<div class="t" style="left:1575px;top:641.2px;height:16px;line-height:16px;font-size:13px;letter-spacing:0px;color:#222">Số dòng/trang</div>
<div class="t" style="left:1669.7px;top:641.2px;height:16px;line-height:16px;font-size:13px;color:#222">20</div>
<svg class="abs" style="left:1697px;top:645px" width="12" height="8" viewBox="0 0 12 8"><path d="M1.5 1.5L6 6L10.5 1.5" fill="none" stroke="#111" stroke-width="2"/></svg>
<div class="t" style="left:1740px;top:641.2px;height:16px;line-height:16px;font-size:13px;color:#888">&lt;</div>
<div class="t" style="left:1757px;top:641.2px;height:16px;line-height:16px;font-size:13px;letter-spacing:-0.2px;color:#222">Trang</div>
<div class="t" style="left:1804.5px;top:641.2px;height:16px;line-height:16px;font-size:13px;font-weight:700;color:#111">1</div>
<div class="t" style="left:1821.5px;top:641.2px;height:16px;line-height:16px;font-size:13px;color:#222">2</div>
<div class="t" style="left:1839.5px;top:641.2px;height:16px;line-height:16px;font-size:13px;color:#222">…</div>
<div class="t" style="left:1859px;top:641.2px;height:16px;line-height:16px;font-size:13px;color:#222">34</div>
<div class="t" style="left:1888.5px;top:641.2px;height:16px;line-height:16px;font-size:13px;color:#111">&gt;</div>
<div class="abs" style="left:290px;top:666px;width:1616px;height:2px;background:#c3c3c3"></div>
<div class="abs" style="left:290px;top:669px;width:1616px;height:1px;background:#d8d8d8"></div>
<div class="t" style="left:306px;top:677.4px;height:16px;line-height:16px;font-size:13px;letter-spacing:0px;color:#3a55e8;-webkit-text-stroke:0.15px #3a55e8">Lịch sử biến động</div>
<div class="t" style="left:441.7px;top:677.4px;height:16px;line-height:16px;font-size:13px;letter-spacing:-0.05px;color:#222;-webkit-text-stroke:0.15px #222">Thông tin kê khai</div>
<div class="t" style="left:572px;top:677.4px;height:16px;line-height:16px;font-size:13px;letter-spacing:-0.13px;color:#222;-webkit-text-stroke:0.15px #222">Tệp đính kèm</div>
<div class="abs" style="left:306px;top:700px;width:104px;height:2.2px;background:#2447ef"></div>
<div class="abs" style="left:1880.5px;top:678.5px;width:15px;height:15px;background:#e3e5ec;border-radius:50%"></div>
<svg class="abs" style="left:1884px;top:683px" width="8" height="6" viewBox="0 0 8 6"><path d="M1 1.2L4 4.2L7 1.2" fill="none" stroke="#2c52ea" stroke-width="1.5"/></svg>
<div class="abs" style="left:290px;top:703px;width:1616px;height:35px;background:#f4f4f4"></div>
<div class="abs" style="left:349px;top:703px;width:1px;height:106px;background:#e6e6e6"></div>
<div class="abs" style="left:469px;top:703px;width:1px;height:106px;background:#e6e6e6"></div>
<div class="abs" style="left:619px;top:703px;width:1px;height:106px;background:#e6e6e6"></div>
<div class="abs" style="left:769px;top:703px;width:1px;height:106px;background:#e6e6e6"></div>
<div class="abs" style="left:1063px;top:703px;width:1px;height:106px;background:#e6e6e6"></div>
<div class="abs" style="left:1213px;top:703px;width:1px;height:106px;background:#e6e6e6"></div>
<div class="abs" style="left:1363px;top:703px;width:1px;height:106px;background:#e6e6e6"></div>
<div class="abs" style="left:1513px;top:703px;width:1px;height:106px;background:#e6e6e6"></div>
<div class="abs" style="left:1663px;top:703px;width:1px;height:106px;background:#e6e6e6"></div>
<div class="abs" style="left:1813px;top:703px;width:1px;height:106px;background:#e6e6e6"></div>
<div class="abs" style="left:1816.5px;top:703px;width:1px;height:106px;background:#e6e6e6"></div>
<div class="abs" style="left:290px;top:738px;width:1616px;height:1px;background:#e6e6e6"></div>
<div class="abs" style="left:290px;top:774px;width:1616px;height:1px;background:#e6e6e6"></div>
<div class="abs" style="left:290px;top:808px;width:1616px;height:1px;background:#e6e6e6"></div>
<div class="t" style="left:290.0px;top:713px;width:59px;height:16px;line-height:16px;text-align:center;font-size:12.8px;font-weight:700;letter-spacing:-0.45px;color:#222">STT</div>
<div class="t" style="left:360px;top:713px;height:16px;line-height:16px;font-size:12.8px;font-weight:700;letter-spacing:-0.45px;color:#222">Số chứng từ</div>
<div class="t" style="left:469.0px;top:713px;width:150px;height:16px;line-height:16px;text-align:center;font-size:12.8px;font-weight:700;letter-spacing:-0.45px;color:#222">Ngày chứng từ</div>
<div class="t" style="left:619.0px;top:713px;width:150px;height:16px;line-height:16px;text-align:center;font-size:12.8px;font-weight:700;letter-spacing:-0.45px;color:#222">Ngày biến động</div>
<div class="t" style="left:780px;top:713px;height:16px;line-height:16px;font-size:12.8px;font-weight:700;letter-spacing:-0.45px;color:#222">Nội dung</div>
<div class="t" style="left:903px;top:713px;width:300px;height:16px;line-height:16px;text-align:right;font-size:12.8px;font-weight:700;letter-spacing:-0.45px;color:#222">Nguyên giá</div>
<div class="t" style="left:1053px;top:713px;width:300px;height:16px;line-height:16px;text-align:right;font-size:12.8px;font-weight:700;letter-spacing:-0.45px;color:#222">Số tiền thực hiện</div>
<div class="t" style="left:1203px;top:713px;width:300px;height:16px;line-height:16px;text-align:right;font-size:12.8px;font-weight:700;letter-spacing:-0.45px;color:#222">Giá trị HM/KH</div>
<div class="t" style="left:1353px;top:713px;width:300px;height:16px;line-height:16px;text-align:right;font-size:12.8px;font-weight:700;letter-spacing:-0.45px;color:#222">HM/KH lũy kế</div>
<div class="t" style="left:1503px;top:713px;width:300px;height:16px;line-height:16px;text-align:right;font-size:12.8px;font-weight:700;letter-spacing:-0.45px;color:#222">Giá trị còn lại</div>
<div class="t" style="left:1811.0px;top:713px;width:100px;height:16px;line-height:16px;text-align:center;font-size:12.8px;font-weight:700;letter-spacing:-0.45px;color:#222">Chức năng</div>
<div class="t" style="left:290.0px;top:748.5px;width:59px;height:16px;line-height:16px;text-align:center;font-size:13px;color:#222;-webkit-text-stroke:0.2px #222">1</div>
<div class="t" style="left:360px;top:748.5px;height:16px;line-height:16px;font-size:13px;color:#2f63d8">GG17</div>
<div class="t" style="left:469.0px;top:748.5px;width:150px;height:16px;line-height:16px;text-align:center;font-size:13px;color:#222;-webkit-text-stroke:0.2px #222">13/06/2025</div>
<div class="t" style="left:619.0px;top:748.5px;width:150px;height:16px;line-height:16px;text-align:center;font-size:13px;color:#222;-webkit-text-stroke:0.2px #222">13/06/2025</div>
<div class="t" style="left:780px;top:748.5px;height:16px;line-height:16px;font-size:13px;color:#222;letter-spacing:-0.2px">Ghi giảm</div>
<div class="t" style="left:903px;top:748.5px;width:300px;height:16px;line-height:16px;text-align:right;font-size:13px;color:#222;-webkit-text-stroke:0.2px #222">13.286.000</div>
<div class="t" style="left:1053px;top:748.5px;width:300px;height:16px;line-height:16px;text-align:right;font-size:13px;color:#222;-webkit-text-stroke:0.2px #222">0</div>
<div class="t" style="left:1203px;top:748.5px;width:300px;height:16px;line-height:16px;text-align:right;font-size:13px;color:#222;-webkit-text-stroke:0.2px #222">0</div>
<div class="t" style="left:1353px;top:748.5px;width:300px;height:16px;line-height:16px;text-align:right;font-size:13px;color:#222;-webkit-text-stroke:0.2px #222">0</div>
<div class="t" style="left:1503px;top:748.5px;width:300px;height:16px;line-height:16px;text-align:right;font-size:13px;color:#222;-webkit-text-stroke:0.2px #222">13.286.000</div>
<svg class="abs" style="left:1851px;top:748.5px" width="16" height="16" viewBox="0 0 16 16"><path d="M2.5 3.5H13.5M6 3.5V2H10V3.5M3.8 3.5L4.6 14H11.4L12.2 3.5M6.6 6V12M9.4 6V12" fill="none" stroke="#c2c2c2" stroke-width="1.1"/></svg>
<div class="t" style="left:290.0px;top:784.5px;width:59px;height:16px;line-height:16px;text-align:center;font-size:13px;color:#222;-webkit-text-stroke:0.2px #222">2</div>
<div class="t" style="left:360px;top:784.5px;height:16px;line-height:16px;font-size:13px;color:#2f63d8">GT513</div>
<div class="t" style="left:469.0px;top:784.5px;width:150px;height:16px;line-height:16px;text-align:center;font-size:13px;color:#222;-webkit-text-stroke:0.2px #222">25/02/2025</div>
<div class="t" style="left:619.0px;top:784.5px;width:150px;height:16px;line-height:16px;text-align:center;font-size:13px;color:#222;-webkit-text-stroke:0.2px #222">25/02/2025</div>
<div class="t" style="left:780px;top:784.5px;height:16px;line-height:16px;font-size:13px;color:#222;letter-spacing:-0.2px">Ghi tăng</div>
<div class="t" style="left:903px;top:784.5px;width:300px;height:16px;line-height:16px;text-align:right;font-size:13px;color:#222;-webkit-text-stroke:0.2px #222">13.286.000</div>
<div class="t" style="left:1053px;top:784.5px;width:300px;height:16px;line-height:16px;text-align:right;font-size:13px;color:#222;-webkit-text-stroke:0.2px #222">0</div>
<div class="t" style="left:1203px;top:784.5px;width:300px;height:16px;line-height:16px;text-align:right;font-size:13px;color:#222;-webkit-text-stroke:0.2px #222">0</div>
<div class="t" style="left:1353px;top:784.5px;width:300px;height:16px;line-height:16px;text-align:right;font-size:13px;color:#222;-webkit-text-stroke:0.2px #222">0</div>
<div class="t" style="left:1503px;top:784.5px;width:300px;height:16px;line-height:16px;text-align:right;font-size:13px;color:#222;-webkit-text-stroke:0.2px #222">13.286.000</div>
<svg class="abs" style="left:1851px;top:784.5px" width="16" height="16" viewBox="0 0 16 16"><path d="M2.5 3.5H13.5M6 3.5V2H10V3.5M3.8 3.5L4.6 14H11.4L12.2 3.5M6.6 6V12M9.4 6V12" fill="none" stroke="#c2c2c2" stroke-width="1.1"/></svg>
<div class="abs" style="left:1906px;top:305px;width:16px;height:16px;background:#2c52ea;border-radius:2px 0 0 2px"></div>
<svg class="abs" style="left:1909px;top:308px" width="10" height="10" viewBox="0 0 10 10"><path d="M3 1.2L6.8 5L3 8.8" fill="none" stroke="#fff" stroke-width="1.6"/></svg>
<div class="abs" style="left:1866px;top:325px;width:56px;height:200px;background:#fff;border-radius:8px 0 0 8px;box-shadow:0 0 4px rgba(0,0,0,0.08)"></div>
<div class="abs" style="left:1874px;top:333px;width:40px;height:40px;background:#2c52ea;border-radius:50%"></div>
<svg class="abs" style="left:1874px;top:333px" width="40" height="40" viewBox="0 0 40 40"><g transform="translate(-2.8 2.6) rotate(45 20 20)" fill="#fff"><rect x="14" y="10.6" width="12" height="1.8" rx="0.9"/><path d="M15 13.6H25L22.6 19.8H17.4Z"/><rect x="16.8" y="19.4" width="6.4" height="6.4" rx="2.2"/><rect x="23.6" y="20.2" width="3" height="6" rx="1.5" transform="rotate(0)"/></g><path d="M23.2 11.6L23.6 10.4M25.2 13L26.6 11.6M26.4 15.4L27.6 15.2" stroke="#fff" stroke-width="1.1" stroke-linecap="round"/></svg>
<svg class="abs" style="left:1874px;top:381px" width="40" height="40" viewBox="0 0 40 40"><defs><linearGradient id="gg" x1="0" y1="0" x2="0" y2="1"><stop offset="0" stop-color="#2fcf7b"/><stop offset="1" stop-color="#0f9e6a"/></linearGradient></defs><circle cx="20" cy="20" r="20" fill="url(#gg)"/><path d="M20 8.8C27 8.8 31.2 13.5 31.2 19.5C31.2 22.6 30 25.2 27.8 27L30.6 30.4L24.8 29.4C23.3 29.9 21.7 30.2 20 30.2C13 30.2 8.8 25.4 8.8 19.5C8.8 13.5 13 8.8 20 8.8Z" fill="#fff"/><circle cx="20" cy="19.6" r="6.6" fill="#16ab6e"/><circle cx="17.2" cy="19.6" r="1.5" fill="#fff"/><circle cx="22.8" cy="19.6" r="1.5" fill="#fff"/></svg>
<svg class="abs" style="left:1874px;top:429px" width="40" height="40" viewBox="0 0 40 40"><circle cx="20" cy="20" r="20" fill="#1436c9"/><circle cx="10.5" cy="12.5" r="4.5" fill="#cfe0ff"/><circle cx="29.5" cy="12.5" r="4.5" fill="#cfe0ff"/><path d="M7 21C7 14 12.5 10.5 20 10.5C27.5 10.5 33 14 33 21C33 27.5 27.5 31 20 31C12.5 31 7 27.5 7 21Z" fill="#e8f0ff"/><rect x="10" y="15.5" width="20" height="12" rx="6" fill="#1b2a6b"/><circle cx="15" cy="21" r="2.6" fill="#7fb4ff"/><circle cx="25" cy="21" r="2.6" fill="#7fb4ff"/><circle cx="15" cy="21" r="1.2" fill="#fff"/><circle cx="25" cy="21" r="1.2" fill="#fff"/><path d="M17.5 25Q20 26.5 22.5 25" stroke="#7fb4ff" stroke-width="1" fill="none"/></svg>
<div class="abs" style="left:1874px;top:477px;width:40px;height:40px;background:#2c52ea;border-radius:50%"></div>
<svg class="abs" style="left:1874px;top:477px" width="40" height="40" viewBox="0 0 40 40"><g fill="#fff"><circle cx="20" cy="15" r="3.9"/><circle cx="12.3" cy="16.3" r="2.9"/><circle cx="27.7" cy="16.3" r="2.9"/><path d="M13.6 28.2C13.6 23 16.2 20.4 20 20.4C23.8 20.4 26.4 23 26.4 28.2Z"/><path d="M7.2 26.8C7.2 22.6 9 20.7 12 20.7C13.2 20.7 14.2 21 15 21.7C13.9 23.1 13.2 25 13.2 26.8Z"/><path d="M32.8 26.8C32.8 22.6 31 20.7 28 20.7C26.8 20.7 25.8 21 25 21.7C26.1 23.1 26.8 25 26.8 26.8Z"/></g></svg>
<div class="abs" style="left:1872px;top:475px;width:12px;height:12px;background:#f5a623;border-radius:50%"></div>
<!--/MAIN-->
</body></html>
